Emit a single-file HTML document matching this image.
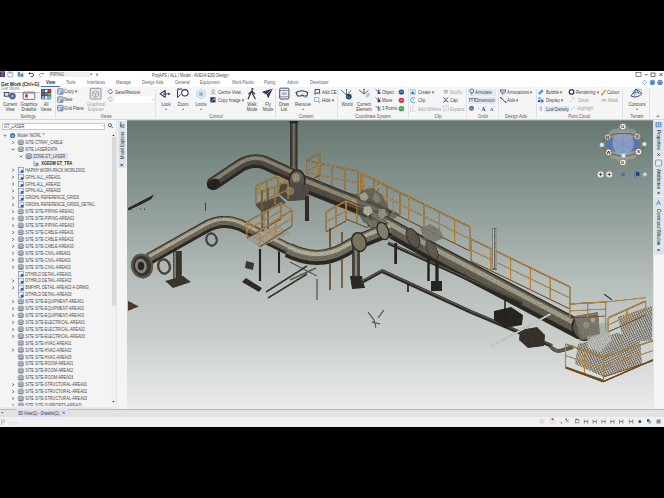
<!DOCTYPE html>
<html><head><meta charset="utf-8">
<style>
html,body{margin:0;padding:0}
body{width:664px;height:498px;background:#000;position:relative;overflow:hidden;font-family:"Liberation Sans",sans-serif;color:#222}
.a{position:absolute}
.t{position:absolute;white-space:nowrap;line-height:1;font-size:4.3px;color:#333}
svg{position:absolute;overflow:visible}
</style></head><body>

<div class="a" style="left:0px;top:71px;width:664px;height:355px;background:#f3f3f3;"></div>
<div class="a" style="left:0px;top:71px;width:664px;height:8px;background:#ffffff;"></div>
<div class="a" style="left:0px;top:79px;width:664px;height:8px;background:#ffffff;"></div>
<div class="a" style="left:0px;top:87px;width:664px;height:33px;background:#f5f5f5;"></div>
<div class="a" style="left:0px;top:119.4px;width:664px;height:0.7px;background:#d6d6d6;"></div>
<div class="t" style="left:151.5px;top:72.68px;font-size:5.14px;color:#444;transform:scaleX(0.769);transform-origin:0 50%;">ProjAPS | ALL | Model - AVEVA E3D Design</div>
<div class="a" style="left:48px;top:71.6px;width:41.5px;height:5.8px;background:#f0f0f0;"></div>
<div class="t" style="left:49.5px;top:72.22px;font-size:5.46px;color:#5a5a5a;transform:scaleX(0.769);transform-origin:0 50%;">PIPING</div>
<div class="t" style="left:90.2px;top:72.22px;font-size:5.46px;color:#333;transform:scaleX(0.769);transform-origin:0 50%;">&#215;</div>
<div class="t" style="left:95.5px;top:72.67px;font-size:4.55px;color:#333;transform:scaleX(0.769);transform-origin:0 50%;">a</div>
<svg style="left:0;top:0" width="664" height="100"><rect x="636" y="72.5" width="5" height="4" fill="none" stroke="#555" stroke-width="0.7"/><path d="M645 74.8 h2.5" stroke="#333" stroke-width="0.8"/><rect x="651" y="73" width="4" height="3.5" fill="none" stroke="#333" stroke-width="0.7"/><path d="M659.5 73 l3 3 M662.5 73 l-3 3" stroke="#333" stroke-width="0.8"/><path d="M644.6 80.2 l2.2 2.2 -2.2 2.2 -2.2 -2.2z" fill="none" stroke="#3a7ac0" stroke-width="0.6"/><circle cx="652.4" cy="82.4" r="2.6" fill="#2f6fb8"/><circle cx="660" cy="82.4" r="2.6" fill="#2f6fb8"/><circle cx="652.4" cy="82.4" r="1.9" fill="none" stroke="#fff" stroke-width="0.35"/><circle cx="660" cy="82.4" r="1.9" fill="none" stroke="#fff" stroke-width="0.35"/><path d="M652.4 81 v1.3 M659.4 81.4 q0.6 -0.6 1.2 0 q0 0.6 -0.6 0.9 v0.4" fill="none" stroke="#fff" stroke-width="0.5"/></svg>
<div class="t" style="left:45.5px;top:80.49px;font-size:5.33px;color:#333;transform:scaleX(0.769);transform-origin:0 50%;font-weight:bold;">View</div>
<div class="t" style="left:66px;top:80.49px;font-size:5.33px;color:#666;transform:scaleX(0.769);transform-origin:0 50%;">Tools</div>
<div class="t" style="left:87px;top:80.49px;font-size:5.33px;color:#666;transform:scaleX(0.769);transform-origin:0 50%;">Interfaces</div>
<div class="t" style="left:115.8px;top:80.49px;font-size:5.33px;color:#666;transform:scaleX(0.769);transform-origin:0 50%;">Manage</div>
<div class="t" style="left:142px;top:80.49px;font-size:5.33px;color:#666;transform:scaleX(0.769);transform-origin:0 50%;">Design Aids</div>
<div class="t" style="left:175px;top:80.49px;font-size:5.33px;color:#666;transform:scaleX(0.769);transform-origin:0 50%;">General</div>
<div class="t" style="left:200px;top:80.49px;font-size:5.33px;color:#666;transform:scaleX(0.769);transform-origin:0 50%;">Equipment</div>
<div class="t" style="left:232px;top:80.49px;font-size:5.33px;color:#666;transform:scaleX(0.769);transform-origin:0 50%;">Work Packs</div>
<div class="t" style="left:264px;top:80.49px;font-size:5.33px;color:#666;transform:scaleX(0.769);transform-origin:0 50%;">Piping</div>
<div class="t" style="left:287px;top:80.49px;font-size:5.33px;color:#666;transform:scaleX(0.769);transform-origin:0 50%;">Admin</div>
<div class="t" style="left:310px;top:80.49px;font-size:5.33px;color:#666;transform:scaleX(0.769);transform-origin:0 50%;">Developer</div>
<div class="a" style="left:41px;top:86px;width:19px;height:0.9px;background:#3b6fd8;"></div>
<div class="a" style="left:0px;top:78.8px;width:39.7px;height:12.8px;background:#fafafa;box-shadow:0.3px 0.6px 0.8px rgba(0,0,0,0.18)"></div>
<div class="t" style="left:1px;top:80.67px;font-size:5.98px;color:#2a2a2a;transform:scaleX(0.769);transform-origin:0 50%;font-weight:bold;letter-spacing:-0.05px">Get Work (Ctrl+G)</div>
<div class="t" style="left:1px;top:86.00px;font-size:5.72px;color:#8a8a8a;transform:scaleX(0.769);transform-origin:0 50%;">Get Work</div>
<div class="t" style="left:-20.5px;width:60px;text-align:center;top:101.89px;font-size:5.53px;color:#424242;transform:scaleX(0.769);">Current</div>
<div class="t" style="left:-20.5px;width:60px;text-align:center;top:107.29px;font-size:5.53px;color:#424242;transform:scaleX(0.769);">View</div>
<div class="t" style="left:-1.5px;width:60px;text-align:center;top:101.89px;font-size:5.53px;color:#424242;transform:scaleX(0.769);">Graphics</div>
<div class="t" style="left:-1.5px;width:60px;text-align:center;top:107.29px;font-size:5.53px;color:#424242;transform:scaleX(0.769);">Drawlist</div>
<div class="t" style="left:16px;width:60px;text-align:center;top:101.89px;font-size:5.53px;color:#424242;transform:scaleX(0.769);">All</div>
<div class="t" style="left:16px;width:60px;text-align:center;top:107.29px;font-size:5.53px;color:#424242;transform:scaleX(0.769);">Views</div>
<div class="t" style="left:65.5px;width:60px;text-align:center;top:101.89px;font-size:5.53px;color:#a0a0a0;transform:scaleX(0.769);">Graphical</div>
<div class="t" style="left:65.5px;width:60px;text-align:center;top:107.29px;font-size:5.53px;color:#a0a0a0;transform:scaleX(0.769);">Explorer</div>
<div class="t" style="left:135.5px;width:60px;text-align:center;top:101.89px;font-size:5.53px;color:#424242;transform:scaleX(0.769);">Look</div>
<div class="t" style="left:135.5px;width:60px;text-align:center;top:107.29px;font-size:5.53px;color:#424242;transform:scaleX(0.769);">&#8226;</div>
<div class="t" style="left:153px;width:60px;text-align:center;top:101.89px;font-size:5.53px;color:#424242;transform:scaleX(0.769);">Zoom</div>
<div class="t" style="left:153px;width:60px;text-align:center;top:107.29px;font-size:5.53px;color:#424242;transform:scaleX(0.769);">&#8226;</div>
<div class="t" style="left:170.5px;width:60px;text-align:center;top:101.89px;font-size:5.53px;color:#424242;transform:scaleX(0.769);">Limits</div>
<div class="t" style="left:170.5px;width:60px;text-align:center;top:107.29px;font-size:5.53px;color:#424242;transform:scaleX(0.769);">&#8226;</div>
<div class="t" style="left:221.5px;width:60px;text-align:center;top:101.89px;font-size:5.53px;color:#424242;transform:scaleX(0.769);">Walk</div>
<div class="t" style="left:221.5px;width:60px;text-align:center;top:107.29px;font-size:5.53px;color:#424242;transform:scaleX(0.769);">Mode</div>
<div class="t" style="left:238px;width:60px;text-align:center;top:101.89px;font-size:5.53px;color:#424242;transform:scaleX(0.769);">Fly</div>
<div class="t" style="left:238px;width:60px;text-align:center;top:107.29px;font-size:5.53px;color:#424242;transform:scaleX(0.769);">Mode</div>
<div class="t" style="left:254px;width:60px;text-align:center;top:101.89px;font-size:5.53px;color:#424242;transform:scaleX(0.769);">Draw</div>
<div class="t" style="left:254px;width:60px;text-align:center;top:107.29px;font-size:5.53px;color:#424242;transform:scaleX(0.769);">List</div>
<div class="t" style="left:272.5px;width:60px;text-align:center;top:101.89px;font-size:5.53px;color:#424242;transform:scaleX(0.769);">Remove</div>
<div class="t" style="left:272.5px;width:60px;text-align:center;top:107.29px;font-size:5.53px;color:#424242;transform:scaleX(0.769);">&#8226;</div>
<div class="t" style="left:316.5px;width:60px;text-align:center;top:101.89px;font-size:5.53px;color:#424242;transform:scaleX(0.769);">World</div>
<div class="t" style="left:334px;width:60px;text-align:center;top:101.89px;font-size:5.53px;color:#424242;transform:scaleX(0.769);">Current</div>
<div class="t" style="left:334px;width:60px;text-align:center;top:107.29px;font-size:5.53px;color:#424242;transform:scaleX(0.769);">Element</div>
<div class="t" style="left:606.5px;width:60px;text-align:center;top:101.89px;font-size:5.53px;color:#424242;transform:scaleX(0.769);">Contours</div>
<div class="t" style="left:606.5px;width:60px;text-align:center;top:107.29px;font-size:5.53px;color:#424242;transform:scaleX(0.769);">&#8226;</div>
<div class="a" style="left:468px;top:89px;width:28px;height:6.5px;background:#dfe8f7;"></div>
<div class="a" style="left:468px;top:97.3px;width:28px;height:6.5px;background:#dfe8f7;"></div>
<div class="a" style="left:544px;top:105.8px;width:25px;height:6px;background:#dfe8f7;"></div>
<div class="t" style="left:64px;top:89.22px;font-size:5.46px;color:#424242;transform:scaleX(0.769);transform-origin:0 50%;">Copy &#9662;</div>
<div class="t" style="left:64px;top:97.32px;font-size:5.46px;color:#424242;transform:scaleX(0.769);transform-origin:0 50%;">New</div>
<div class="t" style="left:64px;top:105.72px;font-size:5.46px;color:#424242;transform:scaleX(0.769);transform-origin:0 50%;">Grid Plane</div>
<div class="t" style="left:115px;top:89.72px;font-size:5.46px;color:#424242;transform:scaleX(0.769);transform-origin:0 50%;">Save/Restore</div>
<div class="t" style="left:218px;top:89.72px;font-size:5.46px;color:#424242;transform:scaleX(0.769);transform-origin:0 50%;">Centre View</div>
<div class="t" style="left:218px;top:97.72px;font-size:5.46px;color:#424242;transform:scaleX(0.769);transform-origin:0 50%;">Copy Image &#9662;</div>
<div class="t" style="left:322px;top:89.72px;font-size:5.46px;color:#424242;transform:scaleX(0.769);transform-origin:0 50%;">Add CE</div>
<div class="t" style="left:322px;top:97.72px;font-size:5.46px;color:#424242;transform:scaleX(0.769);transform-origin:0 50%;">Hide &#9662;</div>
<div class="t" style="left:381.5px;top:89.72px;font-size:5.46px;color:#424242;transform:scaleX(0.769);transform-origin:0 50%;">Object</div>
<div class="t" style="left:382px;top:97.72px;font-size:5.46px;color:#424242;transform:scaleX(0.769);transform-origin:0 50%;">Move</div>
<div class="t" style="left:382px;top:106.32px;font-size:5.46px;color:#424242;transform:scaleX(0.769);transform-origin:0 50%;">3 Points</div>
<div class="t" style="left:418px;top:89.72px;font-size:5.46px;color:#424242;transform:scaleX(0.769);transform-origin:0 50%;">Create &#9662;</div>
<div class="t" style="left:418px;top:97.72px;font-size:5.46px;color:#424242;transform:scaleX(0.769);transform-origin:0 50%;">Clip</div>
<div class="t" style="left:418px;top:106.72px;font-size:5.46px;color:#a0a0a0;transform:scaleX(0.769);transform-origin:0 50%;">Add Within &#9662;</div>
<div class="t" style="left:450px;top:89.72px;font-size:5.46px;color:#a0a0a0;transform:scaleX(0.769);transform-origin:0 50%;">Modify</div>
<div class="t" style="left:450px;top:97.72px;font-size:5.46px;color:#424242;transform:scaleX(0.769);transform-origin:0 50%;">Cap</div>
<div class="t" style="left:450px;top:106.72px;font-size:5.46px;color:#a0a0a0;transform:scaleX(0.769);transform-origin:0 50%;">Expand</div>
<div class="t" style="left:475px;top:89.72px;font-size:5.46px;color:#424242;transform:scaleX(0.769);transform-origin:0 50%;">Annotate</div>
<div class="t" style="left:475px;top:98.22px;font-size:5.46px;color:#424242;transform:scaleX(0.769);transform-origin:0 50%;">Dimension</div>
<div class="t" style="left:507px;top:89.72px;font-size:5.46px;color:#424242;transform:scaleX(0.769);transform-origin:0 50%;">Annotations &#9662;</div>
<div class="t" style="left:507px;top:97.72px;font-size:5.46px;color:#424242;transform:scaleX(0.769);transform-origin:0 50%;">Aids &#9662;</div>
<div class="t" style="left:546px;top:89.72px;font-size:5.46px;color:#424242;transform:scaleX(0.769);transform-origin:0 50%;">Bubble &#9662;</div>
<div class="t" style="left:546px;top:97.72px;font-size:5.46px;color:#424242;transform:scaleX(0.769);transform-origin:0 50%;">Display &#9662;</div>
<div class="t" style="left:545.5px;top:106.52px;font-size:5.46px;color:#424242;transform:scaleX(0.769);transform-origin:0 50%;">Low Density</div>
<div class="t" style="left:576px;top:89.72px;font-size:5.46px;color:#424242;transform:scaleX(0.769);transform-origin:0 50%;">Rendering &#9662;</div>
<div class="t" style="left:578px;top:97.72px;font-size:5.46px;color:#a0a0a0;transform:scaleX(0.769);transform-origin:0 50%;">Detail</div>
<div class="t" style="left:577px;top:106.22px;font-size:5.46px;color:#a0a0a0;transform:scaleX(0.769);transform-origin:0 50%;">Highlight</div>
<div class="t" style="left:607px;top:89.72px;font-size:5.46px;color:#424242;transform:scaleX(0.769);transform-origin:0 50%;">Colour</div>
<div class="t" style="left:607.8px;top:97.72px;font-size:5.46px;color:#a0a0a0;transform:scaleX(0.769);transform-origin:0 50%;">Mask</div>
<div class="a" style="left:115px;top:96.2px;width:39px;height:7px;background:#ffffff;"></div>
<div class="t" style="left:-2.5px;width:60px;text-align:center;top:113.52px;font-size:5.46px;color:#555;transform:scaleX(0.769);">Settings</div>
<div class="t" style="left:75.5px;width:60px;text-align:center;top:113.52px;font-size:5.46px;color:#555;transform:scaleX(0.769);">Views</div>
<div class="t" style="left:186px;width:60px;text-align:center;top:113.52px;font-size:5.46px;color:#555;transform:scaleX(0.769);">Control</div>
<div class="t" style="left:276px;width:60px;text-align:center;top:113.52px;font-size:5.46px;color:#555;transform:scaleX(0.769);">Content</div>
<div class="t" style="left:343px;width:60px;text-align:center;top:113.52px;font-size:5.46px;color:#555;transform:scaleX(0.769);">Coordinate System</div>
<div class="t" style="left:407.5px;width:60px;text-align:center;top:113.52px;font-size:5.46px;color:#555;transform:scaleX(0.769);">Clip</div>
<div class="t" style="left:452.5px;width:60px;text-align:center;top:113.52px;font-size:5.46px;color:#555;transform:scaleX(0.769);">Grids</div>
<div class="t" style="left:486px;width:60px;text-align:center;top:113.52px;font-size:5.46px;color:#555;transform:scaleX(0.769);">Design Aids</div>
<div class="t" style="left:549px;width:60px;text-align:center;top:113.52px;font-size:5.46px;color:#555;transform:scaleX(0.769);">Point Cloud</div>
<div class="t" style="left:606.5px;width:60px;text-align:center;top:113.52px;font-size:5.46px;color:#555;transform:scaleX(0.769);">Terrain</div>
<div class="a" style="left:55.1px;top:89px;width:1.2px;height:29px;background:#dde2ea;"></div>
<div class="a" style="left:155.2px;top:89px;width:1.2px;height:29px;background:#dde2ea;"></div>
<div class="a" style="left:275.3px;top:89px;width:1.2px;height:29px;background:#dde2ea;"></div>
<div class="a" style="left:337.3px;top:89px;width:1.2px;height:29px;background:#dde2ea;"></div>
<div class="a" style="left:407.5px;top:89px;width:1.2px;height:29px;background:#dde2ea;"></div>
<div class="a" style="left:465.7px;top:89px;width:1.2px;height:29px;background:#dde2ea;"></div>
<div class="a" style="left:498.3px;top:89px;width:1.2px;height:29px;background:#dde2ea;"></div>
<div class="a" style="left:535.5px;top:89px;width:1.2px;height:29px;background:#dde2ea;"></div>
<div class="a" style="left:622.0px;top:89px;width:1.2px;height:29px;background:#dde2ea;"></div>
<div class="a" style="left:649.2px;top:89px;width:1.2px;height:29px;background:#dde2ea;"></div>
<svg style="left:0;top:0" width="664" height="120"><path d="M656.5 117 l1.5 -1.5 1.5 1.5" fill="none" stroke="#222" stroke-width="0.7"/></svg>
<svg style="left:0;top:0" width="664" height="120"><rect x="0" y="71.3" width="5" height="5.8" fill="#4a2a72"/><path d="M1 72.5 h3 M1 74.2 h3 M1 75.9 h3" stroke="#b9a6d6" stroke-width="0.5"/><rect x="7.8" y="72" width="5" height="4.8" rx="0.6" fill="none" stroke="#8a95a5" stroke-width="0.8"/><rect x="9.3" y="72" width="2" height="1.6" fill="#8a95a5"/><rect x="16.8" y="71.3" width="7.5" height="6.2" fill="#e4ebf6"/><rect x="17.8" y="72" width="2.2" height="4.6" fill="#5b8fd0"/><rect x="20.5" y="73.8" width="2.8" height="2.9" fill="#6f7a88"/><path d="M29.5 73.4 h2.5 a1.6 1.6 0 0 1 0 3.2 h-1.5" fill="none" stroke="#2b3a55" stroke-width="0.9"/><path d="M28.2 73.4 l1.8 -1.4 v2.8z" fill="#2b3a55"/><path d="M43 73.6 h-2.3 a1.5 1.5 0 0 0 0 3 h0.8" fill="none" stroke="#888" stroke-width="0.7"/><path d="M44.3 73.6 l-1.6 -1.2 v2.4z" fill="#888"/><rect x="4.3" y="92.6" width="4.6" height="3.6" fill="#dfe6ee" stroke="#2b3a55" stroke-width="0.9"/><circle cx="12.4" cy="96.1" r="2.9" fill="#5c7fae" stroke="#2b3a55" stroke-width="0.8"/><circle cx="12.4" cy="96.1" r="0.9" fill="#b8cde6"/><rect x="23.2" y="92.2" width="11.6" height="7.2" rx="0.8" fill="#f2f6fb" stroke="#5d6673" stroke-width="0.9"/><rect x="25.2" y="94.3" width="2.5" height="3.2" fill="#d8202c"/><path d="M23.2 93.2 h11.6" stroke="#5d6673" stroke-width="0.6"/><rect x="41" y="89" width="10.2" height="10.2" rx="0.6" fill="#34435a"/><rect x="41.70" y="89.70" width="2.6" height="2.6" fill="#3b8fe8"/><rect x="44.95" y="89.70" width="2.6" height="2.6" fill="#ffffff"/><rect x="48.20" y="89.70" width="2.6" height="2.6" fill="#e2303c"/><rect x="41.70" y="92.95" width="2.6" height="2.6" fill="#e2303c"/><rect x="44.95" y="92.95" width="2.6" height="2.6" fill="#3b8fe8"/><rect x="48.20" y="92.95" width="2.6" height="2.6" fill="#66cc3e"/><rect x="41.70" y="96.20" width="2.6" height="2.6" fill="#8ecaf2"/><rect x="44.95" y="96.20" width="2.6" height="2.6" fill="#ffffff"/><rect x="48.20" y="96.20" width="2.6" height="2.6" fill="#8ecaf2"/><rect x="57.8" y="88.8" width="5.2" height="5.4" rx="0.5" fill="#e9eef5" stroke="#56606e" stroke-width="0.8"/><path d="M57.8 91.0 h5.2" stroke="#56606e" stroke-width="0.5"/><rect x="60.4" y="91.7" width="2.4" height="2.3" fill="#4f8fd8"/><rect x="57.8" y="96.9" width="5.2" height="5.4" rx="0.5" fill="#e9eef5" stroke="#56606e" stroke-width="0.8"/><path d="M57.8 99.1 h5.2" stroke="#56606e" stroke-width="0.5"/><rect x="60.4" y="99.8" width="2.4" height="2.3" fill="#4f8fd8"/><rect x="57.8" y="105.4" width="5.2" height="5.4" rx="0.5" fill="#e9eef5" stroke="#56606e" stroke-width="0.8"/><path d="M57.8 107.6 h5.2" stroke="#56606e" stroke-width="0.5"/><rect x="60.4" y="108.3" width="2.4" height="2.3" fill="#4f8fd8"/><rect x="90.2" y="88.3" width="10.8" height="10.8" rx="0.8" fill="#e6e6e6" stroke="#8c8c8c" stroke-width="0.9"/><path d="M95.6 90.6 l3 1.6 v3.5 l-3 1.6 -3 -1.6 v-3.5z M92.6 92.2 l3 1.6 3 -1.6 M95.6 93.8 v3.5" fill="none" stroke="#8a8a8a" stroke-width="0.6"/><path d="M108 91.5 a2.3 2 0 0 1 4.2 -1" fill="none" stroke="#3f84d4" stroke-width="1"/><path d="M112.6 91.6 a2.3 2 0 0 1 -4.2 1" fill="none" stroke="#5a6a80" stroke-width="1"/><path d="M108 99 a2.3 2 0 0 1 4.2 -1" fill="none" stroke="#aaa" stroke-width="0.8"/><path d="M112.6 99.1 a2.3 2 0 0 1 -4.2 1" fill="none" stroke="#aaa" stroke-width="0.8"/><path d="M151.5 99 l0.8 0.8 0.8 -0.8" fill="none" stroke="#666" stroke-width="0.45"/><path d="M160 93.9 l5.2 -3.4 v6.8z" fill="none" stroke="#2b3a55" stroke-width="1.1" stroke-linejoin="round"/><path d="M163.5 93.9 h5.5" stroke="#2b3a55" stroke-width="0.9"/><path d="M168.2 92.6 l2.4 1.3 -2.4 1.3z" fill="#2b3a55"/><circle cx="163.6" cy="93.9" r="0.8" fill="#3a7ad0"/><path d="M177.5 89 h4.5 M177.5 89 v8.5 l3 -3" fill="none" stroke="#2b3a55" stroke-width="1"/><rect x="177.3" y="88.8" width="2.2" height="1.5" fill="#4f8fd8"/><circle cx="184.9" cy="92.8" r="3.2" fill="#fff" stroke="#2b3a55" stroke-width="1.1"/><path d="M197 91.5 l4 -2.2 4 2.2 v5 l-4 2.2 -4 -2.2z" fill="#e4f0fb" stroke="#9ccaf0" stroke-width="0.7"/><circle cx="201" cy="94" r="2" fill="#c9dcee" stroke="#6d8fb3" stroke-width="0.5"/><circle cx="201" cy="94" r="0.7" fill="#3b5a88"/><circle cx="213.2" cy="90.8" r="1.3" fill="none" stroke="#6c8fb8" stroke-width="0.6"/><path d="M210.8 94.4 q2.4 -3.6 4.8 0" fill="#cfe2f5" stroke="#6c8fb8" stroke-width="0.6"/><rect x="210.3" y="97.2" width="5.2" height="5.2" fill="#2b3a55"/><path d="M211 101 l2 -1.6 2 -1.4 v1.6z" fill="#9fd0f2"/><circle cx="252.4" cy="89" r="1.1" fill="#2b3a55"/><path d="M252 90.6 l-1.8 3.6 -2 4.6 M252 90.6 l0.8 3.6 2.4 4.6 M250.4 92 l-1.6 2 M252.8 92 l1.8 1.8" fill="none" stroke="#2b3a55" stroke-width="1.2" stroke-linecap="round"/><path d="M261.8 92 l11 -3.6 -4.6 10.2 -1.6 -4.2z" fill="#2b3a55"/><path d="M266.6 94.4 l6 -5.8" stroke="#f5f5f5" stroke-width="0.5"/><rect x="279.7" y="88.2" width="9.2" height="10.8" rx="1" fill="#e8edf3" stroke="#4b5668" stroke-width="1"/><path d="M280 90.5 h8.6 M280 96.8 h8.6" stroke="#4b5668" stroke-width="0.6"/><path d="M282 93.6 q2.3 -2 4.6 0 q-2.3 2 -4.6 0z" fill="none" stroke="#4b5668" stroke-width="0.5"/><path d="M296 92.5 q5.8 -3.4 11.6 0 l-0.6 3.5 h-3.5 l-1.2 -1.2 -1.2 1.2 h-3.5z" fill="#f0f0f0" stroke="#2b3a55" stroke-width="1.1" stroke-linejoin="round"/><path d="M304.5 97.3 h3" stroke="#4f9fe8" stroke-width="0.7"/><path d="M315 89.5 h4.6 v3.6 h-3.2 l-1.4 1.3z" fill="none" stroke="#2b3a55" stroke-width="0.9"/><path d="M317.5 94 h3" stroke="#4f9fe8" stroke-width="0.6"/><rect x="314.5" y="97.4" width="4.4" height="4" fill="none" stroke="#7cb4e8" stroke-width="0.8"/><path d="M318 101.3 l1.8 1.4" stroke="#555" stroke-width="0.6"/><path d="M346.5 95 l-5.2 -4.5 M346.5 95 v-5.5 M346.5 95 l4.5 -4.3" stroke="#3b4556" stroke-width="0.7"/><path d="M346.5 89 l-0.8 1 h1.6z M341 90.2 l1.2 0 -0.5 1z M351.4 90 l-1.2 0.2 0.6 0.9z" fill="#3b4556"/><circle cx="348.8" cy="96.6" r="2.9" fill="#24426e"/><path d="M347.3 96 a1.6 1.6 0 0 0 3 0.8" fill="none" stroke="#8fc3f0" stroke-width="0.6"/><path d="M364 94 l-5 -4 M364 94 v-5.2 M364 94 l4.5 -3.6" stroke="#2b3a55" stroke-width="0.8"/><path d="M364 88.4 l-0.8 1 h1.6z" fill="#2b3a55"/><path d="M366.5 97.6 l2.6 -1.8 v-3 l-2.6 1.6z" fill="#9dc8ef" stroke="#6aaee8" stroke-width="0.4"/><path d="M378.5 91.8 l-3 -2.4 M378.5 91.8 v-2.6 M378.5 91.8 l2 -1.6" stroke="#2b3a55" stroke-width="0.7"/><rect x="377.6" y="91.8" width="2.8" height="2.2" fill="#2b5d9e"/><path d="M378.5 100.0 l-3 -2.4 M378.5 100.0 v-2.6 M378.5 100.0 l2 -1.6" stroke="#2b3a55" stroke-width="0.7"/><rect x="377.6" y="100.0" width="2.8" height="2.2" fill="#2b3a55"/><path d="M378.5 108.5 l-3 -2.4 M378.5 108.5 v-2.6 M378.5 108.5 l2 -1.6" stroke="#2b3a55" stroke-width="0.7"/><rect x="377.6" y="108.5" width="2.8" height="2.2" fill="#4f9fe8"/><ellipse cx="401.4" cy="92" rx="2.8" ry="2.6" fill="#2b4f9e"/><path d="M399.5 92.2 q1.9 -1.4 3.8 0" fill="none" stroke="#fff" stroke-width="0.5"/><ellipse cx="401.4" cy="100.3" rx="2.8" ry="2.6" fill="#d8303c"/><path d="M399.5 100.5 q1.9 -1.4 3.8 0" fill="none" stroke="#fff" stroke-width="0.5"/><ellipse cx="401.4" cy="108.7" rx="2.8" ry="2.6" fill="#3aa04a"/><path d="M399.5 108.9 q1.9 -1.4 3.8 0" fill="none" stroke="#fff" stroke-width="0.5"/><rect x="410.3" y="89.4" width="5.2" height="5" fill="#cfe3f6" stroke="#7fb6ea" stroke-width="0.5"/><path d="M411 93.8 l1.8 -2.6 1.8 2.6z" fill="#3b5a88"/><path d="M415.2 98.4 a2.6 2.6 0 1 0 0 3.4" fill="none" stroke="#5aa0e6" stroke-width="1"/><path d="M412.5 99.3 l1.5 1 " stroke="#3b4556" stroke-width="0.6"/><path d="M410.5 106 v5 h5 M412 106 h2 M413 107.5 v2" fill="none" stroke="#bdbdbd" stroke-width="0.6"/><path d="M443.5 90 h4.8 l-0.8 3 h-3.2z" fill="#bdbdbd"/><path d="M444.5 93.5 h3" stroke="#bdbdbd" stroke-width="0.6"/><path d="M443.3 97.5 l2.5 2 2.5 -2 M443.3 102.3 l2.5 -2 2.5 2" fill="none" stroke="#2b3a55" stroke-width="0.9"/><path d="M443.3 101.3 h5.2" stroke="#4f9fe8" stroke-width="0.6"/><rect x="443.5" y="106" width="5" height="4.8" fill="none" stroke="#c2c2c2" stroke-width="0.6"/><path d="M443.5 106 l5 4.8 M448.5 106 l-5 4.8" stroke="#c8c8c8" stroke-width="0.4"/><circle cx="471.8" cy="91" r="1.9" fill="none" stroke="#3b4556" stroke-width="0.7"/><path d="M471.8 93 v1.8" stroke="#3b4556" stroke-width="0.7"/><path d="M469.2 98.5 h5.5 M469.5 98.5 v3 M472 98.5 v3 M474.5 98.5 v3" stroke="#3b4556" stroke-width="0.6"/><circle cx="471.5" cy="108.3" r="2.5" fill="#6b7584"/><path d="M470.5 108.5 h2" stroke="#e8e8e8" stroke-width="0.5"/><path d="M478.5 108 l0.6 0.6 0.6 -0.6z" fill="#333"/><text x="481.2" y="110.5" font-size="6" font-weight="bold" fill="#2b3a55" font-family="Liberation Serif">A</text><circle cx="486.2" cy="106.4" r="0.5" fill="#4f9fe8"/><text x="489.8" y="110.5" font-size="5" font-weight="bold" fill="#2b3a55" font-family="Liberation Serif">A</text><circle cx="494" cy="106.2" r="0.5" fill="#4f9fe8"/><path d="M500.2 90 h5.6 l-1 2.6 -1.8 1.8 -1.8 -1.8z" fill="none" stroke="#2b3a55" stroke-width="0.8"/><circle cx="503" cy="92.3" r="1" fill="#6aaee8"/><path d="M500.5 97.5 l5.5 5" stroke="#2b3a55" stroke-width="0.9"/><circle cx="500.8" cy="97.8" r="0.7" fill="#2b3a55"/><circle cx="505.7" cy="102.2" r="0.7" fill="#2b3a55"/><path d="M502.5 98 l1.2 -1" stroke="#4f9fe8" stroke-width="0.6"/><path d="M538.3 92.8 l3.5 -3.5 1.7 1.7 -3.5 3.5 q-1.8 0.5 -1.7 -1.7z" fill="#3b8fe0"/><path d="M538.6 93 l2 -2" stroke="#cfe6fb" stroke-width="0.5"/><circle cx="539.6" cy="98.3" r="1.3" fill="#6ab0ec"/><circle cx="542" cy="101" r="1.8" fill="#3b8fe0"/><circle cx="539" cy="101.2" r="1.1" fill="#24426e"/><path d="M540.2 106.3 v4.6 M541.5 106.3 v4.6" stroke="#a4a9b4" stroke-width="0.8"/><circle cx="571.6" cy="91.9" r="2.3" fill="none" stroke="#2b3a55" stroke-width="1.3"/><path d="M569.8 102.3 l2.5 -2.5 M571.5 98.5 a1.5 1.5 0 1 1 2.5 1.5" fill="none" stroke="#bbb" stroke-width="0.7"/><path d="M570.3 110.8 l4 -4" stroke="#b5b5b5" stroke-width="0.8"/><path d="M601.8 94.5 l3.6 -4.2" stroke="#ec8a1a" stroke-width="1.3" stroke-linecap="round"/><path d="M601.4 95 h1.2" stroke="#444" stroke-width="0.5"/><path d="M601.5 100.2 q2.5 -2 5 0 q-2.5 2 -5 0z" fill="none" stroke="#b8b8b8" stroke-width="0.8"/><path d="M602 101.8 l4 -3" stroke="#bbb" stroke-width="0.5"/><path d="M631 96 l5 -7 6 4.5 q-5 5.5 -11 2.5z" fill="#dbe9f7" stroke="#2b3a55" stroke-width="0.9" stroke-linejoin="round"/><path d="M636 89 l-1.5 6.5 M636 89 l3.5 5.2 M633 93 q3 -1 6 0" fill="none" stroke="#2b3a55" stroke-width="0.5"/><path d="M637.5 89.2 q3 -0.5 4.5 1.5" fill="none" stroke="#4f8fd8" stroke-width="0.7"/></svg>
<div class="a" style="left:0px;top:120px;width:117px;height:287px;background:#f4f4f4;"></div>
<div class="a" style="left:2px;top:122.5px;width:103px;height:7px;background:#ffffff;border:0.5px solid #c9c9c9;box-sizing:border-box"></div>
<div class="t" style="left:3.5px;top:123.92px;font-size:5.07px;color:#444;transform:scaleX(0.769);transform-origin:0 50%;">GT_LASER</div>
<svg style="left:0;top:0" width="130" height="420"><path d="M101.8 125.4 l1 1 1 -1" fill="none" stroke="#777" stroke-width="0.5"/><circle cx="110" cy="125.2" r="1.6" fill="none" stroke="#333" stroke-width="0.7"/><path d="M111.2 126.4 l1.6 1.6" stroke="#333" stroke-width="0.8"/></svg>
<div class="a" style="left:111px;top:133px;width:5px;height:271px;background:#f1f1f1;"></div>
<div class="a" style="left:111.5px;top:137px;width:4.2px;height:169px;background:#d9d9d9;"></div>
<svg style="left:0;top:0" width="130" height="420"><path d="M112.3 136 l1.2 -1.3 1.2 1.3z M112.3 401 l1.2 1.3 1.2 -1.3z" fill="#111"/></svg>
<svg style="left:0;top:0" width="117" height="406"><defs><clipPath id="tc"><rect x="0" y="131" width="111" height="275"/></clipPath></defs><g clip-path="url(#tc)"><path d="M3.7 134.90 l1.4 1.3 1.4 -1.3" fill="none" stroke="#3a3a3a" stroke-width="0.8"/><circle cx="12.6" cy="135.50" r="2.6" fill="#3f78b5"/><path d="M11 134.50 q1 1 2.5 0.5 l0.5 1.5 -1.5 1z" fill="#9ccf6a"/><text x="17.3" y="137.10" font-size="5.1" fill="#4a4a4a" font-weight="normal" font-family="Liberation Sans" textLength="27.28" lengthAdjust="spacingAndGlyphs">Model 'WORL' *</text><path d="M12.4 141.12 l1.3 1.4 -1.3 1.4" fill="none" stroke="#3a3a3a" stroke-width="0.8"/><ellipse cx="20.9" cy="143.62" rx="2.9" ry="1.5" fill="#6f7a88"/><ellipse cx="20.9" cy="142.52" rx="2.9" ry="1.5" fill="#d0d6de" stroke="#6f7a88" stroke-width="0.45"/><ellipse cx="20.9" cy="141.22" rx="2.9" ry="1.5" fill="#aab3bf" stroke="#6f7a88" stroke-width="0.45"/><text x="25.3" y="144.02" font-size="5.1" fill="#4a4a4a" font-weight="normal" font-family="Liberation Sans" textLength="37.35" lengthAdjust="spacingAndGlyphs">SITE CTRAY_CABLE</text><path d="M11.7 148.74 l1.4 1.3 1.4 -1.3" fill="none" stroke="#3a3a3a" stroke-width="0.8"/><ellipse cx="20.9" cy="150.54" rx="2.9" ry="1.5" fill="#6f7a88"/><ellipse cx="20.9" cy="149.44" rx="2.9" ry="1.5" fill="#d0d6de" stroke="#6f7a88" stroke-width="0.45"/><ellipse cx="20.9" cy="148.14" rx="2.9" ry="1.5" fill="#aab3bf" stroke="#6f7a88" stroke-width="0.45"/><text x="25.3" y="150.94" font-size="5.1" fill="#4a4a4a" font-weight="normal" font-family="Liberation Sans" textLength="32.11" lengthAdjust="spacingAndGlyphs">SITE LASERDATA</text><path d="M19.7 155.66 l1.4 1.3 1.4 -1.3" fill="none" stroke="#3a3a3a" stroke-width="0.8"/><rect x="25" y="152.96" width="43" height="6.6" fill="#dce4f2"/><ellipse cx="28.9" cy="157.46" rx="2.9" ry="1.5" fill="#6f7a88"/><ellipse cx="28.9" cy="156.36" rx="2.9" ry="1.5" fill="#d0d6de" stroke="#6f7a88" stroke-width="0.45"/><ellipse cx="28.9" cy="155.06" rx="2.9" ry="1.5" fill="#aab3bf" stroke="#6f7a88" stroke-width="0.45"/><text x="33.3" y="157.86" font-size="5.1" fill="#4a4a4a" font-weight="normal" font-family="Liberation Sans" textLength="32.04" lengthAdjust="spacingAndGlyphs">ZONE GT_LASER</text><path d="M34 160.68 v5 h5" fill="none" stroke="#6b7683" stroke-width="0.7"/><rect x="35.5" y="162.68" width="3" height="2.5" fill="#7c8794"/><text x="41.3" y="164.78" font-size="5.1" fill="#1e1e1e" font-weight="bold" font-family="Liberation Sans" textLength="30.96" lengthAdjust="spacingAndGlyphs">XGEOM GT_TRA</text><path d="M12.4 168.80 l1.3 1.4 -1.3 1.4" fill="none" stroke="#3a3a3a" stroke-width="0.8"/><rect x="18.3" y="167.50" width="5" height="5.2" fill="#e8eef6" stroke="#5a6a80" stroke-width="0.5"/><rect x="20.8" y="170.30" width="2.6" height="2.4" fill="#2d5da0"/><text x="25.3" y="171.70" font-size="5.1" fill="#4a4a4a" font-weight="normal" font-family="Liberation Sans" textLength="59.93" lengthAdjust="spacingAndGlyphs">HAPKH WORK-PACK WORLD001</text><path d="M12.4 175.72 l1.3 1.4 -1.3 1.4" fill="none" stroke="#3a3a3a" stroke-width="0.8"/><rect x="18.3" y="174.42" width="5" height="5.2" fill="#e8eef6" stroke="#5a6a80" stroke-width="0.5"/><rect x="20.8" y="177.22" width="2.6" height="2.4" fill="#2d5da0"/><text x="25.3" y="178.62" font-size="5.1" fill="#4a4a4a" font-weight="normal" font-family="Liberation Sans" textLength="35.14" lengthAdjust="spacingAndGlyphs">GPHL ALL_AREA01</text><path d="M12.4 182.64 l1.3 1.4 -1.3 1.4" fill="none" stroke="#3a3a3a" stroke-width="0.8"/><rect x="18.3" y="181.34" width="5" height="5.2" fill="#e8eef6" stroke="#5a6a80" stroke-width="0.5"/><rect x="20.8" y="184.14" width="2.6" height="2.4" fill="#2d5da0"/><text x="25.3" y="185.54" font-size="5.1" fill="#4a4a4a" font-weight="normal" font-family="Liberation Sans" textLength="35.14" lengthAdjust="spacingAndGlyphs">GPHL ALL_AREA02</text><path d="M12.4 189.56 l1.3 1.4 -1.3 1.4" fill="none" stroke="#3a3a3a" stroke-width="0.8"/><rect x="18.3" y="188.26" width="5" height="5.2" fill="#e8eef6" stroke="#5a6a80" stroke-width="0.5"/><rect x="20.8" y="191.06" width="2.6" height="2.4" fill="#2d5da0"/><text x="25.3" y="192.46" font-size="5.1" fill="#4a4a4a" font-weight="normal" font-family="Liberation Sans" textLength="35.14" lengthAdjust="spacingAndGlyphs">GPHL ALL_AREA03</text><path d="M12.4 196.48 l1.3 1.4 -1.3 1.4" fill="none" stroke="#3a3a3a" stroke-width="0.8"/><rect x="18.3" y="195.18" width="5" height="5.2" fill="#e8eef6" stroke="#5a6a80" stroke-width="0.5"/><rect x="20.8" y="197.98" width="2.6" height="2.4" fill="#2d5da0"/><text x="25.3" y="199.38" font-size="5.1" fill="#4a4a4a" font-weight="normal" font-family="Liberation Sans" textLength="53.83" lengthAdjust="spacingAndGlyphs">GRIDHL REFERENCE_GRIDS</text><path d="M12.4 203.40 l1.3 1.4 -1.3 1.4" fill="none" stroke="#3a3a3a" stroke-width="0.8"/><rect x="18.3" y="202.10" width="5" height="5.2" fill="#e8eef6" stroke="#5a6a80" stroke-width="0.5"/><rect x="20.8" y="204.90" width="2.6" height="2.4" fill="#2d5da0"/><text x="25.3" y="206.30" font-size="5.1" fill="#4a4a4a" font-weight="normal" font-family="Liberation Sans" textLength="69.24" lengthAdjust="spacingAndGlyphs">GRIDHL REFERENCE_GRIDS_DETAIL</text><path d="M12.4 210.32 l1.3 1.4 -1.3 1.4" fill="none" stroke="#3a3a3a" stroke-width="0.8"/><ellipse cx="20.9" cy="212.82" rx="2.9" ry="1.5" fill="#6f7a88"/><ellipse cx="20.9" cy="211.72" rx="2.9" ry="1.5" fill="#d0d6de" stroke="#6f7a88" stroke-width="0.45"/><ellipse cx="20.9" cy="210.42" rx="2.9" ry="1.5" fill="#aab3bf" stroke="#6f7a88" stroke-width="0.45"/><text x="25.3" y="213.22" font-size="5.1" fill="#4a4a4a" font-weight="normal" font-family="Liberation Sans" textLength="48.82" lengthAdjust="spacingAndGlyphs">SITE SITE-PIPING-AREA01</text><path d="M12.4 217.24 l1.3 1.4 -1.3 1.4" fill="none" stroke="#3a3a3a" stroke-width="0.8"/><ellipse cx="20.9" cy="219.74" rx="2.9" ry="1.5" fill="#6f7a88"/><ellipse cx="20.9" cy="218.64" rx="2.9" ry="1.5" fill="#d0d6de" stroke="#6f7a88" stroke-width="0.45"/><ellipse cx="20.9" cy="217.34" rx="2.9" ry="1.5" fill="#aab3bf" stroke="#6f7a88" stroke-width="0.45"/><text x="25.3" y="220.14" font-size="5.1" fill="#4a4a4a" font-weight="normal" font-family="Liberation Sans" textLength="48.82" lengthAdjust="spacingAndGlyphs">SITE SITE-PIPING-AREA02</text><path d="M12.4 224.16 l1.3 1.4 -1.3 1.4" fill="none" stroke="#3a3a3a" stroke-width="0.8"/><ellipse cx="20.9" cy="226.66" rx="2.9" ry="1.5" fill="#6f7a88"/><ellipse cx="20.9" cy="225.56" rx="2.9" ry="1.5" fill="#d0d6de" stroke="#6f7a88" stroke-width="0.45"/><ellipse cx="20.9" cy="224.26" rx="2.9" ry="1.5" fill="#aab3bf" stroke="#6f7a88" stroke-width="0.45"/><text x="25.3" y="227.06" font-size="5.1" fill="#4a4a4a" font-weight="normal" font-family="Liberation Sans" textLength="48.82" lengthAdjust="spacingAndGlyphs">SITE SITE-PIPING-AREA03</text><path d="M12.4 231.08 l1.3 1.4 -1.3 1.4" fill="none" stroke="#3a3a3a" stroke-width="0.8"/><ellipse cx="20.9" cy="233.58" rx="2.9" ry="1.5" fill="#6f7a88"/><ellipse cx="20.9" cy="232.48" rx="2.9" ry="1.5" fill="#d0d6de" stroke="#6f7a88" stroke-width="0.45"/><ellipse cx="20.9" cy="231.18" rx="2.9" ry="1.5" fill="#aab3bf" stroke="#6f7a88" stroke-width="0.45"/><text x="25.3" y="233.98" font-size="5.1" fill="#4a4a4a" font-weight="normal" font-family="Liberation Sans" textLength="48.39" lengthAdjust="spacingAndGlyphs">SITE SITE-CABLE-AREA01</text><path d="M12.4 238.00 l1.3 1.4 -1.3 1.4" fill="none" stroke="#3a3a3a" stroke-width="0.8"/><ellipse cx="20.9" cy="240.50" rx="2.9" ry="1.5" fill="#6f7a88"/><ellipse cx="20.9" cy="239.40" rx="2.9" ry="1.5" fill="#d0d6de" stroke="#6f7a88" stroke-width="0.45"/><ellipse cx="20.9" cy="238.10" rx="2.9" ry="1.5" fill="#aab3bf" stroke="#6f7a88" stroke-width="0.45"/><text x="25.3" y="240.90" font-size="5.1" fill="#4a4a4a" font-weight="normal" font-family="Liberation Sans" textLength="48.39" lengthAdjust="spacingAndGlyphs">SITE SITE-CABLE-AREA02</text><path d="M12.4 244.92 l1.3 1.4 -1.3 1.4" fill="none" stroke="#3a3a3a" stroke-width="0.8"/><ellipse cx="20.9" cy="247.42" rx="2.9" ry="1.5" fill="#6f7a88"/><ellipse cx="20.9" cy="246.32" rx="2.9" ry="1.5" fill="#d0d6de" stroke="#6f7a88" stroke-width="0.45"/><ellipse cx="20.9" cy="245.02" rx="2.9" ry="1.5" fill="#aab3bf" stroke="#6f7a88" stroke-width="0.45"/><text x="25.3" y="247.82" font-size="5.1" fill="#4a4a4a" font-weight="normal" font-family="Liberation Sans" textLength="48.39" lengthAdjust="spacingAndGlyphs">SITE SITE-CABLE-AREA03</text><path d="M12.4 251.84 l1.3 1.4 -1.3 1.4" fill="none" stroke="#3a3a3a" stroke-width="0.8"/><ellipse cx="20.9" cy="254.34" rx="2.9" ry="1.5" fill="#6f7a88"/><ellipse cx="20.9" cy="253.24" rx="2.9" ry="1.5" fill="#d0d6de" stroke="#6f7a88" stroke-width="0.45"/><ellipse cx="20.9" cy="251.94" rx="2.9" ry="1.5" fill="#aab3bf" stroke="#6f7a88" stroke-width="0.45"/><text x="25.3" y="254.74" font-size="5.1" fill="#4a4a4a" font-weight="normal" font-family="Liberation Sans" textLength="45.38" lengthAdjust="spacingAndGlyphs">SITE SITE-CIVIL-AREA01</text><path d="M12.4 258.76 l1.3 1.4 -1.3 1.4" fill="none" stroke="#3a3a3a" stroke-width="0.8"/><ellipse cx="20.9" cy="261.26" rx="2.9" ry="1.5" fill="#6f7a88"/><ellipse cx="20.9" cy="260.16" rx="2.9" ry="1.5" fill="#d0d6de" stroke="#6f7a88" stroke-width="0.45"/><ellipse cx="20.9" cy="258.86" rx="2.9" ry="1.5" fill="#aab3bf" stroke="#6f7a88" stroke-width="0.45"/><text x="25.3" y="261.66" font-size="5.1" fill="#4a4a4a" font-weight="normal" font-family="Liberation Sans" textLength="45.38" lengthAdjust="spacingAndGlyphs">SITE SITE-CIVIL-AREA02</text><path d="M12.4 265.68 l1.3 1.4 -1.3 1.4" fill="none" stroke="#3a3a3a" stroke-width="0.8"/><ellipse cx="20.9" cy="268.18" rx="2.9" ry="1.5" fill="#6f7a88"/><ellipse cx="20.9" cy="267.08" rx="2.9" ry="1.5" fill="#d0d6de" stroke="#6f7a88" stroke-width="0.45"/><ellipse cx="20.9" cy="265.78" rx="2.9" ry="1.5" fill="#aab3bf" stroke="#6f7a88" stroke-width="0.45"/><text x="25.3" y="268.58" font-size="5.1" fill="#4a4a4a" font-weight="normal" font-family="Liberation Sans" textLength="45.38" lengthAdjust="spacingAndGlyphs">SITE SITE-CIVIL-AREA03</text><rect x="18.3" y="271.30" width="5" height="5.2" fill="#e8eef6" stroke="#5a6a80" stroke-width="0.5"/><rect x="20.8" y="274.10" width="2.6" height="2.4" fill="#2d5da0"/><text x="25.3" y="275.50" font-size="5.1" fill="#4a4a4a" font-weight="normal" font-family="Liberation Sans" textLength="46.16" lengthAdjust="spacingAndGlyphs">DTHRLD DETAIL-AREA01</text><path d="M12.4 279.52 l1.3 1.4 -1.3 1.4" fill="none" stroke="#3a3a3a" stroke-width="0.8"/><rect x="18.3" y="278.22" width="5" height="5.2" fill="#e8eef6" stroke="#5a6a80" stroke-width="0.5"/><rect x="20.8" y="281.02" width="2.6" height="2.4" fill="#2d5da0"/><text x="25.3" y="282.42" font-size="5.1" fill="#4a4a4a" font-weight="normal" font-family="Liberation Sans" textLength="46.16" lengthAdjust="spacingAndGlyphs">DTHRLD DETAIL-AREA02</text><path d="M12.4 286.44 l1.3 1.4 -1.3 1.4" fill="none" stroke="#3a3a3a" stroke-width="0.8"/><rect x="18.3" y="285.14" width="5" height="5.2" fill="#e8eef6" stroke="#5a6a80" stroke-width="0.5"/><rect x="20.8" y="287.94" width="2.6" height="2.4" fill="#2d5da0"/><text x="25.3" y="289.34" font-size="5.1" fill="#4a4a4a" font-weight="normal" font-family="Liberation Sans" textLength="63.36" lengthAdjust="spacingAndGlyphs">BMFHPL DETAIL-AREA02-A-DRWG</text><rect x="18.3" y="292.06" width="5" height="5.2" fill="#e8eef6" stroke="#5a6a80" stroke-width="0.5"/><rect x="20.8" y="294.86" width="2.6" height="2.4" fill="#2d5da0"/><text x="25.3" y="296.26" font-size="5.1" fill="#4a4a4a" font-weight="normal" font-family="Liberation Sans" textLength="46.16" lengthAdjust="spacingAndGlyphs">DTHRLD DETAIL-AREA03</text><path d="M12.4 300.28 l1.3 1.4 -1.3 1.4" fill="none" stroke="#3a3a3a" stroke-width="0.8"/><ellipse cx="20.9" cy="302.78" rx="2.9" ry="1.5" fill="#6f7a88"/><ellipse cx="20.9" cy="301.68" rx="2.9" ry="1.5" fill="#d0d6de" stroke="#6f7a88" stroke-width="0.45"/><ellipse cx="20.9" cy="300.38" rx="2.9" ry="1.5" fill="#aab3bf" stroke="#6f7a88" stroke-width="0.45"/><text x="25.3" y="303.18" font-size="5.1" fill="#4a4a4a" font-weight="normal" font-family="Liberation Sans" textLength="58.49" lengthAdjust="spacingAndGlyphs">SITE SITE-EQUIPMENT-AREA01</text><path d="M12.4 307.20 l1.3 1.4 -1.3 1.4" fill="none" stroke="#3a3a3a" stroke-width="0.8"/><ellipse cx="20.9" cy="309.70" rx="2.9" ry="1.5" fill="#6f7a88"/><ellipse cx="20.9" cy="308.60" rx="2.9" ry="1.5" fill="#d0d6de" stroke="#6f7a88" stroke-width="0.45"/><ellipse cx="20.9" cy="307.30" rx="2.9" ry="1.5" fill="#aab3bf" stroke="#6f7a88" stroke-width="0.45"/><text x="25.3" y="310.10" font-size="5.1" fill="#4a4a4a" font-weight="normal" font-family="Liberation Sans" textLength="58.49" lengthAdjust="spacingAndGlyphs">SITE SITE-EQUIPMENT-AREA02</text><path d="M12.4 314.12 l1.3 1.4 -1.3 1.4" fill="none" stroke="#3a3a3a" stroke-width="0.8"/><ellipse cx="20.9" cy="316.62" rx="2.9" ry="1.5" fill="#6f7a88"/><ellipse cx="20.9" cy="315.52" rx="2.9" ry="1.5" fill="#d0d6de" stroke="#6f7a88" stroke-width="0.45"/><ellipse cx="20.9" cy="314.22" rx="2.9" ry="1.5" fill="#aab3bf" stroke="#6f7a88" stroke-width="0.45"/><text x="25.3" y="317.02" font-size="5.1" fill="#4a4a4a" font-weight="normal" font-family="Liberation Sans" textLength="58.49" lengthAdjust="spacingAndGlyphs">SITE SITE-EQUIPMENT-AREA03</text><path d="M12.4 321.04 l1.3 1.4 -1.3 1.4" fill="none" stroke="#3a3a3a" stroke-width="0.8"/><ellipse cx="20.9" cy="323.54" rx="2.9" ry="1.5" fill="#6f7a88"/><ellipse cx="20.9" cy="322.44" rx="2.9" ry="1.5" fill="#d0d6de" stroke="#6f7a88" stroke-width="0.45"/><ellipse cx="20.9" cy="321.14" rx="2.9" ry="1.5" fill="#aab3bf" stroke="#6f7a88" stroke-width="0.45"/><text x="25.3" y="323.94" font-size="5.1" fill="#4a4a4a" font-weight="normal" font-family="Liberation Sans" textLength="59.57" lengthAdjust="spacingAndGlyphs">SITE SITE-ELECTRICAL-AREA01</text><path d="M12.4 327.96 l1.3 1.4 -1.3 1.4" fill="none" stroke="#3a3a3a" stroke-width="0.8"/><ellipse cx="20.9" cy="330.46" rx="2.9" ry="1.5" fill="#6f7a88"/><ellipse cx="20.9" cy="329.36" rx="2.9" ry="1.5" fill="#d0d6de" stroke="#6f7a88" stroke-width="0.45"/><ellipse cx="20.9" cy="328.06" rx="2.9" ry="1.5" fill="#aab3bf" stroke="#6f7a88" stroke-width="0.45"/><text x="25.3" y="330.86" font-size="5.1" fill="#4a4a4a" font-weight="normal" font-family="Liberation Sans" textLength="59.57" lengthAdjust="spacingAndGlyphs">SITE SITE-ELECTRICAL-AREA02</text><path d="M12.4 334.88 l1.3 1.4 -1.3 1.4" fill="none" stroke="#3a3a3a" stroke-width="0.8"/><ellipse cx="20.9" cy="337.38" rx="2.9" ry="1.5" fill="#6f7a88"/><ellipse cx="20.9" cy="336.28" rx="2.9" ry="1.5" fill="#d0d6de" stroke="#6f7a88" stroke-width="0.45"/><ellipse cx="20.9" cy="334.98" rx="2.9" ry="1.5" fill="#aab3bf" stroke="#6f7a88" stroke-width="0.45"/><text x="25.3" y="337.78" font-size="5.1" fill="#4a4a4a" font-weight="normal" font-family="Liberation Sans" textLength="59.57" lengthAdjust="spacingAndGlyphs">SITE SITE-ELECTRICAL-AREA03</text><ellipse cx="20.9" cy="344.30" rx="2.9" ry="1.5" fill="#6f7a88"/><ellipse cx="20.9" cy="343.20" rx="2.9" ry="1.5" fill="#d0d6de" stroke="#6f7a88" stroke-width="0.45"/><ellipse cx="20.9" cy="341.90" rx="2.9" ry="1.5" fill="#aab3bf" stroke="#6f7a88" stroke-width="0.45"/><text x="25.3" y="344.70" font-size="5.1" fill="#4a4a4a" font-weight="normal" font-family="Liberation Sans" textLength="46.16" lengthAdjust="spacingAndGlyphs">SITE SITE-HVAC-AREA01</text><path d="M12.4 348.72 l1.3 1.4 -1.3 1.4" fill="none" stroke="#3a3a3a" stroke-width="0.8"/><ellipse cx="20.9" cy="351.22" rx="2.9" ry="1.5" fill="#6f7a88"/><ellipse cx="20.9" cy="350.12" rx="2.9" ry="1.5" fill="#d0d6de" stroke="#6f7a88" stroke-width="0.45"/><ellipse cx="20.9" cy="348.82" rx="2.9" ry="1.5" fill="#aab3bf" stroke="#6f7a88" stroke-width="0.45"/><text x="25.3" y="351.62" font-size="5.1" fill="#4a4a4a" font-weight="normal" font-family="Liberation Sans" textLength="46.16" lengthAdjust="spacingAndGlyphs">SITE SITE-HVAC-AREA02</text><ellipse cx="20.9" cy="358.14" rx="2.9" ry="1.5" fill="#6f7a88"/><ellipse cx="20.9" cy="357.04" rx="2.9" ry="1.5" fill="#d0d6de" stroke="#6f7a88" stroke-width="0.45"/><ellipse cx="20.9" cy="355.74" rx="2.9" ry="1.5" fill="#aab3bf" stroke="#6f7a88" stroke-width="0.45"/><text x="25.3" y="358.54" font-size="5.1" fill="#4a4a4a" font-weight="normal" font-family="Liberation Sans" textLength="46.16" lengthAdjust="spacingAndGlyphs">SITE SITE-HVAC-AREA03</text><ellipse cx="20.9" cy="365.06" rx="2.9" ry="1.5" fill="#6f7a88"/><ellipse cx="20.9" cy="363.96" rx="2.9" ry="1.5" fill="#d0d6de" stroke="#6f7a88" stroke-width="0.45"/><ellipse cx="20.9" cy="362.66" rx="2.9" ry="1.5" fill="#aab3bf" stroke="#6f7a88" stroke-width="0.45"/><text x="25.3" y="365.46" font-size="5.1" fill="#4a4a4a" font-weight="normal" font-family="Liberation Sans" textLength="47.74" lengthAdjust="spacingAndGlyphs">SITE SITE-ROOM-AREA01</text><ellipse cx="20.9" cy="371.98" rx="2.9" ry="1.5" fill="#6f7a88"/><ellipse cx="20.9" cy="370.88" rx="2.9" ry="1.5" fill="#d0d6de" stroke="#6f7a88" stroke-width="0.45"/><ellipse cx="20.9" cy="369.58" rx="2.9" ry="1.5" fill="#aab3bf" stroke="#6f7a88" stroke-width="0.45"/><text x="25.3" y="372.38" font-size="5.1" fill="#4a4a4a" font-weight="normal" font-family="Liberation Sans" textLength="47.74" lengthAdjust="spacingAndGlyphs">SITE SITE-ROOM-AREA02</text><ellipse cx="20.9" cy="378.90" rx="2.9" ry="1.5" fill="#6f7a88"/><ellipse cx="20.9" cy="377.80" rx="2.9" ry="1.5" fill="#d0d6de" stroke="#6f7a88" stroke-width="0.45"/><ellipse cx="20.9" cy="376.50" rx="2.9" ry="1.5" fill="#aab3bf" stroke="#6f7a88" stroke-width="0.45"/><text x="25.3" y="379.30" font-size="5.1" fill="#4a4a4a" font-weight="normal" font-family="Liberation Sans" textLength="47.74" lengthAdjust="spacingAndGlyphs">SITE SITE-ROOM-AREA03</text><path d="M12.4 383.32 l1.3 1.4 -1.3 1.4" fill="none" stroke="#3a3a3a" stroke-width="0.8"/><ellipse cx="20.9" cy="385.82" rx="2.9" ry="1.5" fill="#6f7a88"/><ellipse cx="20.9" cy="384.72" rx="2.9" ry="1.5" fill="#d0d6de" stroke="#6f7a88" stroke-width="0.45"/><ellipse cx="20.9" cy="383.42" rx="2.9" ry="1.5" fill="#aab3bf" stroke="#6f7a88" stroke-width="0.45"/><text x="25.3" y="386.22" font-size="5.1" fill="#4a4a4a" font-weight="normal" font-family="Liberation Sans" textLength="61.72" lengthAdjust="spacingAndGlyphs">SITE SITE-STRUCTURAL-AREA01</text><path d="M12.4 390.24 l1.3 1.4 -1.3 1.4" fill="none" stroke="#3a3a3a" stroke-width="0.8"/><ellipse cx="20.9" cy="392.74" rx="2.9" ry="1.5" fill="#6f7a88"/><ellipse cx="20.9" cy="391.64" rx="2.9" ry="1.5" fill="#d0d6de" stroke="#6f7a88" stroke-width="0.45"/><ellipse cx="20.9" cy="390.34" rx="2.9" ry="1.5" fill="#aab3bf" stroke="#6f7a88" stroke-width="0.45"/><text x="25.3" y="393.14" font-size="5.1" fill="#4a4a4a" font-weight="normal" font-family="Liberation Sans" textLength="61.72" lengthAdjust="spacingAndGlyphs">SITE SITE-STRUCTURAL-AREA02</text><path d="M12.4 397.16 l1.3 1.4 -1.3 1.4" fill="none" stroke="#3a3a3a" stroke-width="0.8"/><ellipse cx="20.9" cy="399.66" rx="2.9" ry="1.5" fill="#6f7a88"/><ellipse cx="20.9" cy="398.56" rx="2.9" ry="1.5" fill="#d0d6de" stroke="#6f7a88" stroke-width="0.45"/><ellipse cx="20.9" cy="397.26" rx="2.9" ry="1.5" fill="#aab3bf" stroke="#6f7a88" stroke-width="0.45"/><text x="25.3" y="400.06" font-size="5.1" fill="#4a4a4a" font-weight="normal" font-family="Liberation Sans" textLength="61.72" lengthAdjust="spacingAndGlyphs">SITE SITE-STRUCTURAL-AREA03</text><path d="M12.4 404.08 l1.3 1.4 -1.3 1.4" fill="none" stroke="#3a3a3a" stroke-width="0.8"/><ellipse cx="20.9" cy="406.58" rx="2.9" ry="1.5" fill="#6f7a88"/><ellipse cx="20.9" cy="405.48" rx="2.9" ry="1.5" fill="#d0d6de" stroke="#6f7a88" stroke-width="0.45"/><ellipse cx="20.9" cy="404.18" rx="2.9" ry="1.5" fill="#aab3bf" stroke="#6f7a88" stroke-width="0.45"/><text x="25.3" y="406.98" font-size="5.1" fill="#4a4a4a" font-weight="normal" font-family="Liberation Sans" textLength="56.92" lengthAdjust="spacingAndGlyphs">SITE SITE-SUPPORTS-AREA01</text></g></svg>
<div class="a" style="left:116px;top:120px;width:1.2px;height:287px;background:#e4e4e6;"></div>
<div class="a" style="left:117.2px;top:120px;width:10px;height:289px;background:#f3f4f6;"></div>
<div class="a" style="left:117.5px;top:121px;width:8.8px;height:47px;background:#dde3ef;"></div>
<svg style="left:0;top:0" width="130" height="420"><text transform="translate(123.8 159) rotate(-90)" font-size="5" fill="#2e2e2e" font-family="Liberation Sans" textLength="27.5" lengthAdjust="spacingAndGlyphs">Model Explorer</text><path d="M120.5 163.8 l2.4 2.4 M122.9 163.8 l-2.4 2.4" stroke="#111" stroke-width="0.7"/><path d="M120.5 123.5 v3.5 h2.5 M120.5 125.2 h2.5" fill="none" stroke="#3b4556" stroke-width="0.7"/><circle cx="121" cy="122.8" r="0.9" fill="#4f8fd8"/><circle cx="123.6" cy="125.2" r="0.9" fill="#4f8fd8"/><circle cx="123.6" cy="127.2" r="0.9" fill="#4f8fd8"/></svg>
<div class="a" style="left:127px;top:120px;width:526.5px;height:289px;background:linear-gradient(180deg,#64776f 0%,#82918c 21%,#9ba6a2 38%,#b5bdba 55%,#c9cfcd 76%,#ebeceb 100%)"></div>
<div class="a" style="left:127px;top:120px;width:527px;height:0.9px;background:#8e9592;"></div>
<svg style="left:0;top:0" width="664" height="420"><defs><clipPath id="vp"><rect x="128" y="121" width="525" height="287"/></clipPath><filter id="tex" x="0" y="0" width="664" height="420" filterUnits="userSpaceOnUse"><feTurbulence type="fractalNoise" baseFrequency="0.85" numOctaves="2" seed="7" result="n"/><feColorMatrix in="n" type="matrix" values="0.33 0.33 0.33 0 0  0.33 0.33 0.33 0 0  0.33 0.33 0.33 0 0  0 0 0 0 1" result="g"/><feComposite in="SourceGraphic" in2="g" operator="arithmetic" k1="1.7" k2="0.2" k3="0" k4="0" result="c"/><feComposite in="c" in2="SourceAlpha" operator="in"/></filter><pattern id="grt" width="2.2" height="2.2" patternUnits="userSpaceOnUse" patternTransform="rotate(-25)"><rect width="2.2" height="2.2" fill="#55534c"/><path d="M0 0.6 H2.2 M1.1 0 V2.2" stroke="#cfcdc4" stroke-width="0.65"/></pattern></defs><g clip-path="url(#vp)"><g filter="url(#tex)"><path d="M127.5 208.3 L154 194.5 L151.5 199 Q141 205 128 210.5z" fill="#2a2722"/><circle cx="131" cy="209.5" r="0.7" fill="#333"/><circle cx="140.5" cy="208.8" r="0.6" fill="#444"/><circle cx="144.5" cy="209.3" r="0.7" fill="#333"/><path d="M127.5 300.5 L139 306.5 L127.5 311z" fill="#4a3a2e"/><path d="M205.6 203 v8" fill="none" stroke="#3a3630" stroke-width="1" stroke-opacity="1" stroke-linecap="butt" stroke-linejoin="round"/><path d="M293.8 118 V174" fill="none" stroke="#e6e9e6" stroke-opacity="0.3" stroke-width="8.9" stroke-linecap="butt" stroke-linejoin="round"/><path d="M293.8 118 V174" fill="none" stroke="#2a2722" stroke-width="7.5" stroke-linecap="butt" stroke-linejoin="round"/><path d="M293.8 118 V174" fill="none" stroke="#47433b" stroke-width="5.25" stroke-linecap="butt" stroke-linejoin="round" transform="translate(0 -0.75)"/><path d="M293.8 118 V174" fill="none" stroke="#78725f" stroke-width="1.95" stroke-linecap="butt" stroke-linejoin="round" transform="translate(0 -1.65)" opacity="0.9"/><rect x="289.5" y="120" width="8.5" height="3.5" fill="#2a2722"/><path d="M306 185 L358 196 L400 215 L390 221 L346 202 L306 192z" fill="#6f6a5e" opacity="0.75"/><path d="M305.7 160.5 L358 171" fill="none" stroke="#70451a" stroke-width="1.7" stroke-opacity="0.6" stroke-linecap="butt" stroke-linejoin="round"/><path d="M305.7 160.5 L358 171" fill="none" stroke="#b97f2e" stroke-width="1.2" stroke-opacity="1" stroke-linecap="butt" stroke-linejoin="round"/><path d="M305.7 172.5 L358 183.0" fill="none" stroke="#b97f2e" stroke-width="1.02" stroke-opacity="0.95" stroke-linecap="butt" stroke-linejoin="round"/><path d="M305.7 184.5 L358 195" fill="none" stroke="#70451a" stroke-width="1.08" stroke-opacity="0.9" stroke-linecap="butt" stroke-linejoin="round"/><path d="M305.7 160.5 v24" fill="none" stroke="#b97f2e" stroke-width="1.2" stroke-opacity="1" stroke-linecap="butt" stroke-linejoin="round"/><path d="M318.8 163.1 v24" fill="none" stroke="#b97f2e" stroke-width="1.2" stroke-opacity="1" stroke-linecap="butt" stroke-linejoin="round"/><path d="M331.9 165.8 v24" fill="none" stroke="#b97f2e" stroke-width="1.2" stroke-opacity="1" stroke-linecap="butt" stroke-linejoin="round"/><path d="M344.9 168.4 v24" fill="none" stroke="#b97f2e" stroke-width="1.2" stroke-opacity="1" stroke-linecap="butt" stroke-linejoin="round"/><path d="M358.0 171.0 v24" fill="none" stroke="#b97f2e" stroke-width="1.2" stroke-opacity="1" stroke-linecap="butt" stroke-linejoin="round"/><path d="M305.7 160.5 L320 153.3" fill="none" stroke="#70451a" stroke-width="1.7" stroke-opacity="0.6" stroke-linecap="butt" stroke-linejoin="round"/><path d="M305.7 160.5 L320 153.3" fill="none" stroke="#b97f2e" stroke-width="1.2" stroke-opacity="1" stroke-linecap="butt" stroke-linejoin="round"/><path d="M305.7 171.5 L320 164.3" fill="none" stroke="#b97f2e" stroke-width="1.02" stroke-opacity="0.95" stroke-linecap="butt" stroke-linejoin="round"/><path d="M305.7 182.5 L320 175.3" fill="none" stroke="#70451a" stroke-width="1.08" stroke-opacity="0.9" stroke-linecap="butt" stroke-linejoin="round"/><path d="M305.7 160.5 v22" fill="none" stroke="#b97f2e" stroke-width="1.2" stroke-opacity="1" stroke-linecap="butt" stroke-linejoin="round"/><path d="M320.0 153.3 v22" fill="none" stroke="#b97f2e" stroke-width="1.2" stroke-opacity="1" stroke-linecap="butt" stroke-linejoin="round"/><path d="M361 173 L400 193" fill="none" stroke="#70451a" stroke-width="1.7" stroke-opacity="0.6" stroke-linecap="butt" stroke-linejoin="round"/><path d="M361 173 L400 193" fill="none" stroke="#b97f2e" stroke-width="1.2" stroke-opacity="1" stroke-linecap="butt" stroke-linejoin="round"/><path d="M361 184.0 L400 204.0" fill="none" stroke="#b97f2e" stroke-width="1.02" stroke-opacity="0.95" stroke-linecap="butt" stroke-linejoin="round"/><path d="M361 195 L400 215" fill="none" stroke="#70451a" stroke-width="1.08" stroke-opacity="0.9" stroke-linecap="butt" stroke-linejoin="round"/><path d="M361.0 173.0 v22" fill="none" stroke="#b97f2e" stroke-width="1.2" stroke-opacity="1" stroke-linecap="butt" stroke-linejoin="round"/><path d="M374.0 179.7 v22" fill="none" stroke="#b97f2e" stroke-width="1.2" stroke-opacity="1" stroke-linecap="butt" stroke-linejoin="round"/><path d="M387.0 186.3 v22" fill="none" stroke="#b97f2e" stroke-width="1.2" stroke-opacity="1" stroke-linecap="butt" stroke-linejoin="round"/><path d="M400.0 193.0 v22" fill="none" stroke="#b97f2e" stroke-width="1.2" stroke-opacity="1" stroke-linecap="butt" stroke-linejoin="round"/><path d="M362.7 174 L470 227" fill="none" stroke="#70451a" stroke-width="1.7" stroke-opacity="0.6" stroke-linecap="butt" stroke-linejoin="round"/><path d="M362.7 174 L470 227" fill="none" stroke="#b97f2e" stroke-width="1.2" stroke-opacity="1" stroke-linecap="butt" stroke-linejoin="round"/><path d="M362.7 186.0 L470 239.0" fill="none" stroke="#b97f2e" stroke-width="1.02" stroke-opacity="0.95" stroke-linecap="butt" stroke-linejoin="round"/><path d="M362.7 198 L470 251" fill="none" stroke="#70451a" stroke-width="1.08" stroke-opacity="0.9" stroke-linecap="butt" stroke-linejoin="round"/><path d="M362.7 174.0 v24" fill="none" stroke="#b97f2e" stroke-width="1.2" stroke-opacity="1" stroke-linecap="butt" stroke-linejoin="round"/><path d="M378.0 181.6 v24" fill="none" stroke="#b97f2e" stroke-width="1.2" stroke-opacity="1" stroke-linecap="butt" stroke-linejoin="round"/><path d="M393.4 189.1 v24" fill="none" stroke="#b97f2e" stroke-width="1.2" stroke-opacity="1" stroke-linecap="butt" stroke-linejoin="round"/><path d="M408.7 196.7 v24" fill="none" stroke="#b97f2e" stroke-width="1.2" stroke-opacity="1" stroke-linecap="butt" stroke-linejoin="round"/><path d="M424.0 204.3 v24" fill="none" stroke="#b97f2e" stroke-width="1.2" stroke-opacity="1" stroke-linecap="butt" stroke-linejoin="round"/><path d="M439.3 211.9 v24" fill="none" stroke="#b97f2e" stroke-width="1.2" stroke-opacity="1" stroke-linecap="butt" stroke-linejoin="round"/><path d="M454.7 219.4 v24" fill="none" stroke="#b97f2e" stroke-width="1.2" stroke-opacity="1" stroke-linecap="butt" stroke-linejoin="round"/><path d="M470.0 227.0 v24" fill="none" stroke="#b97f2e" stroke-width="1.2" stroke-opacity="1" stroke-linecap="butt" stroke-linejoin="round"/><path d="M213.5 183.5 L239 166.5 Q250 159 263 162 L292 175" fill="none" stroke="#e6e9e6" stroke-opacity="0.3" stroke-width="14.9" stroke-linecap="round" stroke-linejoin="round"/><path d="M213.5 183.5 L239 166.5 Q250 159 263 162 L292 175" fill="none" stroke="#2a2722" stroke-width="13.5" stroke-linecap="round" stroke-linejoin="round"/><path d="M213.5 183.5 L239 166.5 Q250 159 263 162 L292 175" fill="none" stroke="#4a463e" stroke-width="9.45" stroke-linecap="round" stroke-linejoin="round" transform="translate(0 -1.35)"/><path d="M213.5 183.5 L239 166.5 Q250 159 263 162 L292 175" fill="none" stroke="#8c8775" stroke-width="3.51" stroke-linecap="round" stroke-linejoin="round" transform="translate(0 -2.97)" opacity="0.9"/><path d="M292 179 L342 199 L372 211 L388 219" fill="none" stroke="#e6e9e6" stroke-opacity="0.3" stroke-width="17.9" stroke-linecap="butt" stroke-linejoin="round"/><path d="M292 179 L342 199 L372 211 L388 219" fill="none" stroke="#2a2722" stroke-width="16.5" stroke-linecap="butt" stroke-linejoin="round"/><path d="M292 179 L342 199 L372 211 L388 219" fill="none" stroke="#4e4a42" stroke-width="11.55" stroke-linecap="butt" stroke-linejoin="round" transform="translate(0 -1.65)"/><path d="M292 179 L342 199 L372 211 L388 219" fill="none" stroke="#8f8a78" stroke-width="4.29" stroke-linecap="butt" stroke-linejoin="round" transform="translate(0 -3.63)" opacity="0.9"/><ellipse cx="213.5" cy="184" rx="6.8" ry="4.6" transform="rotate(-32 213.5 184)" fill="#24211c"/><ellipse cx="297" cy="180" rx="8" ry="10" fill="#5a5549" stroke="#2c2823" stroke-width="1.6"/><ellipse cx="296" cy="177.5" rx="4" ry="4.5" fill="#8e8876"/><path d="M280 184 L300 183 L310 189 L307 200 L288 201 L279 194z" fill="#4d4840" opacity="1"/><circle cx="290" cy="191" r="4.2" fill="#7b7568"/><path d="M307 196 V221" fill="none" stroke="#2f2b25" stroke-width="4.2" stroke-opacity="1" stroke-linecap="butt" stroke-linejoin="round"/><path d="M255 205 L279 196 L286 203 L262 212z" fill="#4a463e" opacity="0.9"/><path d="M256 186 L278 176" fill="none" stroke="#70451a" stroke-width="1.7" stroke-opacity="0.6" stroke-linecap="butt" stroke-linejoin="round"/><path d="M256 186 L278 176" fill="none" stroke="#b97f2e" stroke-width="1.2" stroke-opacity="1" stroke-linecap="butt" stroke-linejoin="round"/><path d="M256 195.0 L278 185.0" fill="none" stroke="#b97f2e" stroke-width="1.02" stroke-opacity="0.95" stroke-linecap="butt" stroke-linejoin="round"/><path d="M256 204 L278 194" fill="none" stroke="#70451a" stroke-width="1.08" stroke-opacity="0.9" stroke-linecap="butt" stroke-linejoin="round"/><path d="M256.0 186.0 v18" fill="none" stroke="#b97f2e" stroke-width="1.2" stroke-opacity="1" stroke-linecap="butt" stroke-linejoin="round"/><path d="M267.0 181.0 v18" fill="none" stroke="#b97f2e" stroke-width="1.2" stroke-opacity="1" stroke-linecap="butt" stroke-linejoin="round"/><path d="M278.0 176.0 v18" fill="none" stroke="#b97f2e" stroke-width="1.2" stroke-opacity="1" stroke-linecap="butt" stroke-linejoin="round"/><path d="M262 192 L288 181" fill="none" stroke="#70451a" stroke-width="1.7" stroke-opacity="0.6" stroke-linecap="butt" stroke-linejoin="round"/><path d="M262 192 L288 181" fill="none" stroke="#b97f2e" stroke-width="1.2" stroke-opacity="1" stroke-linecap="butt" stroke-linejoin="round"/><path d="M262 201.0 L288 190.0" fill="none" stroke="#b97f2e" stroke-width="1.02" stroke-opacity="0.95" stroke-linecap="butt" stroke-linejoin="round"/><path d="M262.0 192.0 v18" fill="none" stroke="#b97f2e" stroke-width="1.2" stroke-opacity="1" stroke-linecap="butt" stroke-linejoin="round"/><path d="M275.0 186.5 v18" fill="none" stroke="#b97f2e" stroke-width="1.2" stroke-opacity="1" stroke-linecap="butt" stroke-linejoin="round"/><path d="M288.0 181.0 v18" fill="none" stroke="#b97f2e" stroke-width="1.2" stroke-opacity="1" stroke-linecap="butt" stroke-linejoin="round"/><path d="M256 186 L262 192 M278 176 L288 181" fill="none" stroke="#b97f2e" stroke-width="1.1" stroke-opacity="1" stroke-linecap="butt" stroke-linejoin="round"/><path d="M326 212 L346 201" fill="none" stroke="#70451a" stroke-width="1.7" stroke-opacity="0.6" stroke-linecap="butt" stroke-linejoin="round"/><path d="M326 212 L346 201" fill="none" stroke="#b97f2e" stroke-width="1.2" stroke-opacity="1" stroke-linecap="butt" stroke-linejoin="round"/><path d="M326 222.0 L346 211.0" fill="none" stroke="#b97f2e" stroke-width="1.02" stroke-opacity="0.95" stroke-linecap="butt" stroke-linejoin="round"/><path d="M326 232 L346 221" fill="none" stroke="#70451a" stroke-width="1.08" stroke-opacity="0.9" stroke-linecap="butt" stroke-linejoin="round"/><path d="M326.0 212.0 v20" fill="none" stroke="#b97f2e" stroke-width="1.2" stroke-opacity="1" stroke-linecap="butt" stroke-linejoin="round"/><path d="M336.0 206.5 v20" fill="none" stroke="#b97f2e" stroke-width="1.2" stroke-opacity="1" stroke-linecap="butt" stroke-linejoin="round"/><path d="M346.0 201.0 v20" fill="none" stroke="#b97f2e" stroke-width="1.2" stroke-opacity="1" stroke-linecap="butt" stroke-linejoin="round"/><path d="M346 201 L368 210" fill="none" stroke="#70451a" stroke-width="1.7" stroke-opacity="0.6" stroke-linecap="butt" stroke-linejoin="round"/><path d="M346 201 L368 210" fill="none" stroke="#b97f2e" stroke-width="1.2" stroke-opacity="1" stroke-linecap="butt" stroke-linejoin="round"/><path d="M346 210.0 L368 219.0" fill="none" stroke="#b97f2e" stroke-width="1.02" stroke-opacity="0.95" stroke-linecap="butt" stroke-linejoin="round"/><path d="M346 219 L368 228" fill="none" stroke="#70451a" stroke-width="1.08" stroke-opacity="0.9" stroke-linecap="butt" stroke-linejoin="round"/><path d="M346.0 201.0 v18" fill="none" stroke="#b97f2e" stroke-width="1.2" stroke-opacity="1" stroke-linecap="butt" stroke-linejoin="round"/><path d="M357.0 205.5 v18" fill="none" stroke="#b97f2e" stroke-width="1.2" stroke-opacity="1" stroke-linecap="butt" stroke-linejoin="round"/><path d="M368.0 210.0 v18" fill="none" stroke="#b97f2e" stroke-width="1.2" stroke-opacity="1" stroke-linecap="butt" stroke-linejoin="round"/><path d="M262 190 V232 M268 188 V230" fill="none" stroke="#70451a" stroke-width="1.2" stroke-opacity="0.9" stroke-linecap="butt" stroke-linejoin="round"/><path d="M260 249 V281" fill="none" stroke="#24221e" stroke-width="2.4" stroke-opacity="1" stroke-linecap="butt" stroke-linejoin="round"/><path d="M279 250 V273" fill="none" stroke="#24221e" stroke-width="2.2" stroke-opacity="1" stroke-linecap="butt" stroke-linejoin="round"/><path d="M330 228 V290" fill="none" stroke="#70451a" stroke-width="1.6" stroke-opacity="1" stroke-linecap="butt" stroke-linejoin="round"/><path d="M342 232 V288" fill="none" stroke="#70451a" stroke-width="1.4" stroke-opacity="1" stroke-linecap="butt" stroke-linejoin="round"/><path d="M372 218 L440 256 L582 331" fill="none" stroke="#e6e9e6" stroke-opacity="0.3" stroke-width="19.9" stroke-linecap="butt" stroke-linejoin="round"/><path d="M372 218 L440 256 L582 331" fill="none" stroke="#2a2722" stroke-width="18.5" stroke-linecap="butt" stroke-linejoin="round"/><path d="M372 218 L440 256 L582 331" fill="none" stroke="#5c584d" stroke-width="12.95" stroke-linecap="butt" stroke-linejoin="round" transform="translate(0 -1.85)"/><path d="M372 218 L440 256 L582 331" fill="none" stroke="#a29c88" stroke-width="4.81" stroke-linecap="butt" stroke-linejoin="round" transform="translate(0 -4.07)" opacity="0.9"/><path d="M356 198 L362 190 L373 188 L381 194 L388 205 L390 216 L384 225 L374 228 L363 222 L357 211z" fill="#55524a" opacity="0.6"/><path d="M359 195 L365 192 L369 197 L366 201 L361 200z" fill="#9d998e" opacity="1"/><path d="M374 193 L379 195 L381 201 L376 203 L373 199z" fill="#7f7b70" opacity="1"/><path d="M364 207 L370 206 L373 212 L368 216 L363 213z" fill="#aaa69a" opacity="1"/><path d="M379 209 L385 209 L387 215 L382 219 L378 215z" fill="#8e8a7e" opacity="1"/><path d="M367 220 L376 220 L378 227 L370 228z" fill="#6e6a60" opacity="1"/><path d="M364 190 L369 184 M376 189 L381 184 M387 200 L392 196 M357 203 L352 200" fill="none" stroke="#a6a296" stroke-width="1.1" stroke-opacity="1" stroke-linecap="butt" stroke-linejoin="round"/><ellipse cx="413" cy="238" rx="5.5" ry="10.5" transform="rotate(-28 413 238)" fill="#56524a" stroke="#34302a" stroke-width="1.1"/><ellipse cx="432" cy="250" rx="4.5" ry="10" transform="rotate(-28 432 250)" fill="#5e5a4e" stroke="#38342d" stroke-width="0.9"/><path d="M420 229 L430 224 L440 230 L444 238 L434 242 L424 238z" fill="#7d796f" opacity="0.8"/><ellipse cx="582" cy="329" rx="9" ry="12" transform="rotate(-30 582 329)" fill="#57524a" stroke="#2c2823" stroke-width="1.6"/><path d="M574 316 L592 320 L597 336 L580 341z" fill="#6f6a5e" opacity="0.8"/><path d="M471 239 L570 287" fill="none" stroke="#70451a" stroke-width="1.7" stroke-opacity="0.6" stroke-linecap="butt" stroke-linejoin="round"/><path d="M471 239 L570 287" fill="none" stroke="#b97f2e" stroke-width="1.2" stroke-opacity="1" stroke-linecap="butt" stroke-linejoin="round"/><path d="M471 250.0 L570 298.0" fill="none" stroke="#b97f2e" stroke-width="1.02" stroke-opacity="0.95" stroke-linecap="butt" stroke-linejoin="round"/><path d="M471 261 L570 309" fill="none" stroke="#70451a" stroke-width="1.08" stroke-opacity="0.9" stroke-linecap="butt" stroke-linejoin="round"/><path d="M471.0 239.0 v22" fill="none" stroke="#b97f2e" stroke-width="1.2" stroke-opacity="1" stroke-linecap="butt" stroke-linejoin="round"/><path d="M490.8 248.6 v22" fill="none" stroke="#b97f2e" stroke-width="1.2" stroke-opacity="1" stroke-linecap="butt" stroke-linejoin="round"/><path d="M510.6 258.2 v22" fill="none" stroke="#b97f2e" stroke-width="1.2" stroke-opacity="1" stroke-linecap="butt" stroke-linejoin="round"/><path d="M530.4 267.8 v22" fill="none" stroke="#b97f2e" stroke-width="1.2" stroke-opacity="1" stroke-linecap="butt" stroke-linejoin="round"/><path d="M550.2 277.4 v22" fill="none" stroke="#b97f2e" stroke-width="1.2" stroke-opacity="1" stroke-linecap="butt" stroke-linejoin="round"/><path d="M570.0 287.0 v22" fill="none" stroke="#b97f2e" stroke-width="1.2" stroke-opacity="1" stroke-linecap="butt" stroke-linejoin="round"/><path d="M494.5 228 V270" fill="none" stroke="#6a6760" stroke-width="4" stroke-opacity="1" stroke-linecap="butt" stroke-linejoin="round"/><path d="M493.5 229 V268 M496 229 V268" fill="none" stroke="#c4c0b4" stroke-width="0.9" stroke-opacity="1" stroke-linecap="butt" stroke-linejoin="round"/><path d="M149 259 L204 228 Q222 217.5 240 225 L290 250" fill="none" stroke="#e6e9e6" stroke-opacity="0.3" stroke-width="13.4" stroke-linecap="butt" stroke-linejoin="round"/><path d="M149 259 L204 228 Q222 217.5 240 225 L290 250" fill="none" stroke="#2a2722" stroke-width="12" stroke-linecap="butt" stroke-linejoin="round"/><path d="M149 259 L204 228 Q222 217.5 240 225 L290 250" fill="none" stroke="#676355" stroke-width="8.40" stroke-linecap="butt" stroke-linejoin="round" transform="translate(0 -1.20)"/><path d="M149 259 L204 228 Q222 217.5 240 225 L290 250" fill="none" stroke="#b0aa94" stroke-width="3.12" stroke-linecap="butt" stroke-linejoin="round" transform="translate(0 -2.64)" opacity="0.9"/><path d="M288 250 Q318 265 344 250 L360 241 L390 229" fill="none" stroke="#e6e9e6" stroke-opacity="0.3" stroke-width="16.4" stroke-linecap="butt" stroke-linejoin="round"/><path d="M288 250 Q318 265 344 250 L360 241 L390 229" fill="none" stroke="#2a2722" stroke-width="15" stroke-linecap="butt" stroke-linejoin="round"/><path d="M288 250 Q318 265 344 250 L360 241 L390 229" fill="none" stroke="#6d695c" stroke-width="10.50" stroke-linecap="butt" stroke-linejoin="round" transform="translate(0 -1.50)"/><path d="M288 250 Q318 265 344 250 L360 241 L390 229" fill="none" stroke="#b3ad98" stroke-width="3.90" stroke-linecap="butt" stroke-linejoin="round" transform="translate(0 -3.30)" opacity="0.9"/><path d="M246.8 238 L277.5 225.6 L290 232.8 L259.5 247.2z" fill="#a19c8f" opacity="0.9"/><path d="M246.8 222 L281 203" fill="none" stroke="#70451a" stroke-width="1.7" stroke-opacity="0.6" stroke-linecap="butt" stroke-linejoin="round"/><path d="M246.8 222 L281 203" fill="none" stroke="#b97f2e" stroke-width="1.2" stroke-opacity="1" stroke-linecap="butt" stroke-linejoin="round"/><path d="M246.8 230.0 L281 211.0" fill="none" stroke="#b97f2e" stroke-width="1.02" stroke-opacity="0.95" stroke-linecap="butt" stroke-linejoin="round"/><path d="M246.8 238 L281 219" fill="none" stroke="#70451a" stroke-width="1.08" stroke-opacity="0.9" stroke-linecap="butt" stroke-linejoin="round"/><path d="M246.8 222.0 v16" fill="none" stroke="#b97f2e" stroke-width="1.2" stroke-opacity="1" stroke-linecap="butt" stroke-linejoin="round"/><path d="M263.9 212.5 v16" fill="none" stroke="#b97f2e" stroke-width="1.2" stroke-opacity="1" stroke-linecap="butt" stroke-linejoin="round"/><path d="M281.0 203.0 v16" fill="none" stroke="#b97f2e" stroke-width="1.2" stroke-opacity="1" stroke-linecap="butt" stroke-linejoin="round"/><path d="M259.5 231 L292 210" fill="none" stroke="#70451a" stroke-width="1.7" stroke-opacity="0.6" stroke-linecap="butt" stroke-linejoin="round"/><path d="M259.5 231 L292 210" fill="none" stroke="#b97f2e" stroke-width="1.2" stroke-opacity="1" stroke-linecap="butt" stroke-linejoin="round"/><path d="M259.5 239.0 L292 218.0" fill="none" stroke="#b97f2e" stroke-width="1.02" stroke-opacity="0.95" stroke-linecap="butt" stroke-linejoin="round"/><path d="M259.5 247 L292 226" fill="none" stroke="#70451a" stroke-width="1.08" stroke-opacity="0.9" stroke-linecap="butt" stroke-linejoin="round"/><path d="M259.5 231.0 v16" fill="none" stroke="#b97f2e" stroke-width="1.2" stroke-opacity="1" stroke-linecap="butt" stroke-linejoin="round"/><path d="M275.8 220.5 v16" fill="none" stroke="#b97f2e" stroke-width="1.2" stroke-opacity="1" stroke-linecap="butt" stroke-linejoin="round"/><path d="M292.0 210.0 v16" fill="none" stroke="#b97f2e" stroke-width="1.2" stroke-opacity="1" stroke-linecap="butt" stroke-linejoin="round"/><path d="M246.8 222 L259.5 231 M281 203 L292 210" fill="none" stroke="#b97f2e" stroke-width="1.1" stroke-opacity="1" stroke-linecap="butt" stroke-linejoin="round"/><path d="M356 244 V280" fill="none" stroke="#2a2722" stroke-width="7.5" stroke-linecap="butt" stroke-linejoin="round"/><path d="M356 244 V280" fill="none" stroke="#514d43" stroke-width="5.25" stroke-linecap="butt" stroke-linejoin="round" transform="translate(0 -0.75)"/><path d="M356 244 V280" fill="none" stroke="#918b78" stroke-width="1.95" stroke-linecap="butt" stroke-linejoin="round" transform="translate(0 -1.65)" opacity="0.9"/><ellipse cx="359" cy="242" rx="7" ry="9.5" transform="rotate(-20 359 242)" fill="#76715f" stroke="#2c2823" stroke-width="1.5"/><ellipse cx="383" cy="231" rx="5.5" ry="9" transform="rotate(-20 383 231)" fill="#807a68" stroke="#2c2823" stroke-width="1.3"/><path d="M350 276 L362 276 L365 288 L352 289z" fill="#2b2823" opacity="1"/><path d="M362 282 L382 271 L470 311.5 L552 346" fill="none" stroke="#e4e8e5" stroke-width="5.6" stroke-opacity="0.3" stroke-linecap="butt" stroke-linejoin="round"/><path d="M362 282 L382 271 L470 311.5 L552 346" fill="none" stroke="#2b2823" stroke-width="3.6" stroke-opacity="1" stroke-linecap="butt" stroke-linejoin="round"/><path d="M362 281.3 L382 270.3 L470 310.8 L552 345.3" fill="none" stroke="#5f5a4e" stroke-width="1.1" stroke-opacity="1" stroke-linecap="butt" stroke-linejoin="round"/><path d="M550 346 Q556 353 563 350 L573 347" fill="none" stroke="#5a564c" stroke-width="4" stroke-opacity="1" stroke-linecap="butt" stroke-linejoin="round"/><path d="M388 243 L470 280 L522 303" fill="none" stroke="#2b2823" stroke-width="3.2" stroke-opacity="1" stroke-linecap="butt" stroke-linejoin="round"/><path d="M388 242.3 L470 279.3 L522 302.3" fill="none" stroke="#6b6658" stroke-width="0.9" stroke-opacity="1" stroke-linecap="butt" stroke-linejoin="round"/><path d="M395.7 243 V264" fill="none" stroke="#24221e" stroke-width="2.8" stroke-opacity="1" stroke-linecap="butt" stroke-linejoin="round"/><path d="M428.5 259 V281" fill="none" stroke="#24221e" stroke-width="2.4" stroke-opacity="1" stroke-linecap="butt" stroke-linejoin="round"/><path d="M437 261 V290" fill="none" stroke="#24221e" stroke-width="3.2" stroke-opacity="1" stroke-linecap="butt" stroke-linejoin="round"/><rect x="431" y="281" width="11" height="10" fill="#26231f"/><path d="M408 284 V292" fill="none" stroke="#24221e" stroke-width="1.6" stroke-opacity="1" stroke-linecap="butt" stroke-linejoin="round"/><path d="M494 311 L511 307 L523 315 L522 325 L505 328 L494 320z" fill="#26231f" opacity="1"/><path d="M520 330 L537 327 L545 335 L544 346 L528 348 L519 340z" fill="#34302a" opacity="1"/><path d="M491 346.5 L550.5 314" fill="none" stroke="#cbc8be" stroke-width="1.7" stroke-opacity="1" stroke-linecap="butt" stroke-linejoin="round"/><path d="M505 298 L505 325" fill="none" stroke="#24221e" stroke-width="1.5" stroke-opacity="1" stroke-linecap="butt" stroke-linejoin="round"/><ellipse cx="142" cy="266" rx="10" ry="11.5" transform="rotate(-15 142 266)" fill="#37332d" stroke="#5b564a" stroke-width="2.2"/><ellipse cx="141" cy="266" rx="5.8" ry="7.2" transform="rotate(-15 141 266)" fill="#85817a"/><ellipse cx="141" cy="266" rx="3.3" ry="4.3" fill="#2a2722"/><ellipse cx="164" cy="266.5" rx="5.8" ry="7.2" transform="rotate(-15 164 266.5)" fill="none" stroke="#47433a" stroke-width="2.4"/><ellipse cx="211.5" cy="239.5" rx="5.2" ry="6.2" transform="rotate(-15 211.5 239.5)" fill="none" stroke="#47433a" stroke-width="2.2"/><path d="M177.5 251 V280" fill="none" stroke="#36322b" stroke-width="8.5" stroke-opacity="1" stroke-linecap="butt" stroke-linejoin="round"/><path d="M175 252 V279" fill="none" stroke="#7a7568" stroke-width="2" stroke-opacity="1" stroke-linecap="butt" stroke-linejoin="round"/><path d="M165 281 L183 276 L191 282 L173 288z" fill="#38342c" opacity="1"/><path d="M246 261 L254 263 L253 270 L245 268z" fill="#3a362e" opacity="1"/><path d="M242 282 L246 278 L262 288 L259 292z" fill="#2b2823" opacity="1"/><path d="M266 292 L307 266 M268 298 L307 274" fill="none" stroke="#3a362d" stroke-width="1.8" stroke-opacity="1" stroke-linecap="butt" stroke-linejoin="round"/><path d="M317 279 V300" fill="none" stroke="#5a5448" stroke-width="1.3" stroke-opacity="0.8" stroke-linecap="butt" stroke-linejoin="round"/><path d="M368 312 L374 320 L376 328 M384 310 L378 318 M372 322 L380 324" fill="none" stroke="#4a4538" stroke-width="1.3" stroke-opacity="0.75" stroke-linecap="butt" stroke-linejoin="round"/><path d="M290 262 L317 276 M290 280 L316 268" fill="none" stroke="#4a4032" stroke-width="1.4" stroke-opacity="0.8" stroke-linecap="butt" stroke-linejoin="round"/><path d="M578 344 L618 333 L640 341 L642 364 L604 377 L575 364z" fill="url(#grt)" opacity="0.95"/><path d="M586 327 L606 322 L612 340 L600 352 L588 348z" fill="#c9ccc6" opacity="0.55"/><path d="M618 317 L652 306 L652 340 L624 343z" fill="url(#grt)" opacity="0.95"/><path d="M574 316 L598 312 L600 334 L582 338z" fill="#77736a" opacity="1"/><circle cx="586" cy="325" r="3" fill="#8f8b80"/><circle cx="593" cy="320" r="2.2" fill="#a9a598"/><path d="M569.8 304 L605.6 302" fill="none" stroke="#70451a" stroke-width="1.7" stroke-opacity="0.6" stroke-linecap="butt" stroke-linejoin="round"/><path d="M569.8 304 L605.6 302" fill="none" stroke="#b97f2e" stroke-width="1.2" stroke-opacity="1" stroke-linecap="butt" stroke-linejoin="round"/><path d="M569.8 311.0 L605.6 309.0" fill="none" stroke="#b97f2e" stroke-width="1.02" stroke-opacity="0.95" stroke-linecap="butt" stroke-linejoin="round"/><path d="M569.8 318 L605.6 316" fill="none" stroke="#70451a" stroke-width="1.08" stroke-opacity="0.9" stroke-linecap="butt" stroke-linejoin="round"/><path d="M569.8 304.0 v14" fill="none" stroke="#b97f2e" stroke-width="1.2" stroke-opacity="1" stroke-linecap="butt" stroke-linejoin="round"/><path d="M587.7 303.0 v14" fill="none" stroke="#b97f2e" stroke-width="1.2" stroke-opacity="1" stroke-linecap="butt" stroke-linejoin="round"/><path d="M605.6 302.0 v14" fill="none" stroke="#b97f2e" stroke-width="1.2" stroke-opacity="1" stroke-linecap="butt" stroke-linejoin="round"/><path d="M605.6 302 L645.7 297.7" fill="none" stroke="#b97f2e" stroke-width="1" stroke-opacity="1" stroke-linecap="butt" stroke-linejoin="round"/><path d="M608 318 L645.7 301" fill="none" stroke="#70451a" stroke-width="1.7" stroke-opacity="0.6" stroke-linecap="butt" stroke-linejoin="round"/><path d="M608 318 L645.7 301" fill="none" stroke="#b97f2e" stroke-width="1.2" stroke-opacity="1" stroke-linecap="butt" stroke-linejoin="round"/><path d="M608 325.0 L645.7 308.0" fill="none" stroke="#b97f2e" stroke-width="1.02" stroke-opacity="0.95" stroke-linecap="butt" stroke-linejoin="round"/><path d="M608 332 L645.7 315" fill="none" stroke="#70451a" stroke-width="1.08" stroke-opacity="0.9" stroke-linecap="butt" stroke-linejoin="round"/><path d="M608.0 318.0 v14" fill="none" stroke="#b97f2e" stroke-width="1.2" stroke-opacity="1" stroke-linecap="butt" stroke-linejoin="round"/><path d="M626.9 309.5 v14" fill="none" stroke="#b97f2e" stroke-width="1.2" stroke-opacity="1" stroke-linecap="butt" stroke-linejoin="round"/><path d="M645.7 301.0 v14" fill="none" stroke="#b97f2e" stroke-width="1.2" stroke-opacity="1" stroke-linecap="butt" stroke-linejoin="round"/><path d="M605.6 302 V331" fill="none" stroke="#b97f2e" stroke-width="1.1" stroke-opacity="1" stroke-linecap="butt" stroke-linejoin="round"/><path d="M565.5 344 L603.5 357" fill="none" stroke="#70451a" stroke-width="1.7" stroke-opacity="0.6" stroke-linecap="butt" stroke-linejoin="round"/><path d="M565.5 344 L603.5 357" fill="none" stroke="#b97f2e" stroke-width="1.2" stroke-opacity="1" stroke-linecap="butt" stroke-linejoin="round"/><path d="M565.5 355.5 L603.5 368.5" fill="none" stroke="#b97f2e" stroke-width="1.02" stroke-opacity="0.95" stroke-linecap="butt" stroke-linejoin="round"/><path d="M565.5 367 L603.5 380" fill="none" stroke="#70451a" stroke-width="1.08" stroke-opacity="0.9" stroke-linecap="butt" stroke-linejoin="round"/><path d="M565.5 344.0 v23" fill="none" stroke="#b97f2e" stroke-width="1.2" stroke-opacity="1" stroke-linecap="butt" stroke-linejoin="round"/><path d="M584.5 350.5 v23" fill="none" stroke="#b97f2e" stroke-width="1.2" stroke-opacity="1" stroke-linecap="butt" stroke-linejoin="round"/><path d="M603.5 357.0 v23" fill="none" stroke="#b97f2e" stroke-width="1.2" stroke-opacity="1" stroke-linecap="butt" stroke-linejoin="round"/><path d="M603.5 357 L655 340" fill="none" stroke="#70451a" stroke-width="1.7" stroke-opacity="0.6" stroke-linecap="butt" stroke-linejoin="round"/><path d="M603.5 357 L655 340" fill="none" stroke="#b97f2e" stroke-width="1.2" stroke-opacity="1" stroke-linecap="butt" stroke-linejoin="round"/><path d="M603.5 367.0 L655 350.0" fill="none" stroke="#b97f2e" stroke-width="1.02" stroke-opacity="0.95" stroke-linecap="butt" stroke-linejoin="round"/><path d="M603.5 377 L655 360" fill="none" stroke="#70451a" stroke-width="1.08" stroke-opacity="0.9" stroke-linecap="butt" stroke-linejoin="round"/><path d="M603.5 357.0 v20" fill="none" stroke="#b97f2e" stroke-width="1.2" stroke-opacity="1" stroke-linecap="butt" stroke-linejoin="round"/><path d="M629.2 348.5 v20" fill="none" stroke="#b97f2e" stroke-width="1.2" stroke-opacity="1" stroke-linecap="butt" stroke-linejoin="round"/><path d="M655.0 340.0 v20" fill="none" stroke="#b97f2e" stroke-width="1.2" stroke-opacity="1" stroke-linecap="butt" stroke-linejoin="round"/><path d="M565.5 367.5 L603.5 381.5 L655 359" fill="none" stroke="#70451a" stroke-width="1.9" stroke-opacity="1" stroke-linecap="butt" stroke-linejoin="round"/><path d="M604 294 L612 300" fill="none" stroke="#333" stroke-width="1.1" stroke-opacity="1" stroke-linecap="butt" stroke-linejoin="round"/></g></g></svg>
<svg style="left:0;top:0" width="664" height="200"><g fill="#a9bdb0" opacity="0.45"><circle cx="615.3" cy="135" r="6.3"/><circle cx="630.8" cy="135" r="6.3"/><circle cx="615.3" cy="153" r="6.3"/><circle cx="630.8" cy="153" r="6.3"/><circle cx="623" cy="131.5" r="6.3"/><circle cx="623" cy="157" r="6.3"/></g><ellipse cx="623.1" cy="144.3" rx="17" ry="8.6" fill="#5a76ae"/><ellipse cx="623.1" cy="143.3" rx="10.6" ry="12.3" fill="#93a6cb" opacity="0.8"/><path d="M613.1 139.3 L633.1 149.3 M633.1 139.3 L613.1 149.3 M623.1 132.3 V155.3" stroke="#7a88a8" stroke-width="0.4"/><ellipse cx="623.1" cy="144.60000000000002" rx="21.3" ry="11.2" fill="none" stroke="#935c2c" stroke-width="1.1"/><circle cx="601.9" cy="144.9" r="2.1" fill="#cdeefa" stroke="#9cc8dc" stroke-width="0.4"/><circle cx="644.4" cy="144.1" r="2.1" fill="#cdeefa" stroke="#9cc8dc" stroke-width="0.4"/><circle cx="623.5" cy="155.6" r="2.1" fill="#cdeefa" stroke="#9cc8dc" stroke-width="0.4"/><g opacity="1"><circle cx="622.9" cy="126.6" r="3.4" fill="#f6f5f2" stroke="#7a5a3c" stroke-width="0.8"/><text x="622.9" y="128.15" font-size="4.4" font-weight="bold" text-anchor="middle" fill="#1a1a1a" font-family="Liberation Sans">U</text></g><g opacity="0.55"><circle cx="607.6" cy="137.1" r="3.4" fill="#f6f5f2" stroke="#7a5a3c" stroke-width="0.8"/><text x="607.6" y="138.65" font-size="4.4" font-weight="bold" text-anchor="middle" fill="#1a1a1a" font-family="Liberation Sans">N</text></g><g opacity="0.55"><circle cx="637.5" cy="136.4" r="3.4" fill="#f6f5f2" stroke="#7a5a3c" stroke-width="0.8"/><text x="637.5" y="137.95000000000002" font-size="4.4" font-weight="bold" text-anchor="middle" fill="#1a1a1a" font-family="Liberation Sans">E</text></g><g opacity="1"><circle cx="608.6" cy="152.3" r="3.4" fill="#f6f5f2" stroke="#7a5a3c" stroke-width="0.8"/><text x="608.6" y="153.85000000000002" font-size="4.4" font-weight="bold" text-anchor="middle" fill="#1a1a1a" font-family="Liberation Sans">W</text></g><g opacity="1"><circle cx="638.5" cy="151.8" r="3.4" fill="#f6f5f2" stroke="#7a5a3c" stroke-width="0.8"/><text x="638.5" y="153.35000000000002" font-size="4.4" font-weight="bold" text-anchor="middle" fill="#1a1a1a" font-family="Liberation Sans">S</text></g><g opacity="1"><circle cx="622.9" cy="162.4" r="3.4" fill="#f6f5f2" stroke="#7a5a3c" stroke-width="0.8"/><text x="622.9" y="163.95000000000002" font-size="4.4" font-weight="bold" text-anchor="middle" fill="#1a1a1a" font-family="Liberation Sans">D</text></g><circle cx="600.6" cy="174.4" r="2.9" fill="#f7f7f7" stroke="#c8c8c8" stroke-width="0.4"/><path d="M598.8000000000001 174.4 h3.6 M600.6 172.6 v3.6" stroke="#222" stroke-width="0.75"/><circle cx="609.3" cy="174.4" r="2.9" fill="#f7f7f7" stroke="#c8c8c8" stroke-width="0.4"/><path d="M607.5 174.4 h3.6 M609.3 172.6 v3.6" stroke="#222" stroke-width="0.75"/><circle cx="623.1" cy="174.4" r="1.9" fill="#5568b0"/><circle cx="637" cy="174.4" r="2.9" fill="#1f3f70" stroke="#8aa0b8" stroke-width="0.4"/><path d="M635.6 172.6 q-1 2.2 0.6 3.8 q1.6 0.8 2.8 -0.4" fill="none" stroke="#9fd0f5" stroke-width="0.7"/><circle cx="644.9" cy="174.4" r="2.7" fill="#8fa8c0" opacity="0.8"/><path d="M643.4 175.4 h3 v-1.3 l-1.5 -1.3 -1.5 1.3z" fill="#dbe8f2"/></svg>
<div class="a" style="left:653.5px;top:120px;width:10.5px;height:289px;background:#f5f5f6;"></div>
<div class="a" style="left:653.3px;top:120px;width:0.6px;height:289px;background:#e2e2e2;"></div>
<div class="a" style="left:654px;top:121px;width:9.5px;height:37px;background:#dde3ef;"></div>
<div class="a" style="left:654px;top:158.5px;width:9.5px;height:37px;background:#dde3ef;"></div>
<div class="a" style="left:654px;top:196.5px;width:9.5px;height:58px;background:#dde3ef;"></div>
<svg style="left:0;top:0" width="664" height="420"><text transform="translate(657 130) rotate(90)" font-size="5.2" fill="#333" stroke="#333" stroke-width="0.05" font-family="Liberation Sans" textLength="20" lengthAdjust="spacingAndGlyphs">Properties</text><text transform="translate(657 169) rotate(90)" font-size="5.2" fill="#333" stroke="#333" stroke-width="0.05" font-family="Liberation Sans" textLength="20" lengthAdjust="spacingAndGlyphs">Attributes</text><text transform="translate(657 209) rotate(90)" font-size="5.2" fill="#333" stroke="#333" stroke-width="0.05" font-family="Liberation Sans" textLength="36" lengthAdjust="spacingAndGlyphs">Command Window</text><path d="M657.5 153.5 l2.2 2.2 M659.7 153.5 l-2.2 2.2 M657.5 191.8 l2.2 2.2 M659.7 191.8 l-2.2 2.2 M657.5 249 l2.2 2.2 M659.7 249 l-2.2 2.2" stroke="#111" stroke-width="0.7"/><rect x="655.5" y="122.3" width="6" height="5" rx="0.8" fill="#5a7fb8"/><path d="M655.5 124 h6 M655.5 125.7 h6 M657.5 122.3 v5 M659.5 122.3 v5" stroke="#fff" stroke-width="0.4"/><rect x="655.5" y="160" width="6" height="6" rx="1" fill="#e8eef6" stroke="#555" stroke-width="0.5"/><path d="M656.5 205 l2 -4.5 2 4.5 M657.3 203.3 h2.4" fill="none" stroke="#3a7ac0" stroke-width="0.7"/></svg>
<div class="a" style="left:0px;top:406.5px;width:117px;height:2.5px;background:#e9e9e9;"></div>
<div class="a" style="left:0px;top:409px;width:664px;height:8px;background:#e2e2e2;"></div>
<div class="a" style="left:0px;top:417px;width:664px;height:9.5px;background:#f0f0f0;"></div>
<div class="a" style="left:0px;top:408.6px;width:664px;height:0.7px;background:#b8b8b8;"></div>
<div class="a" style="left:16px;top:408.6px;width:52px;height:8.2px;background:#dcdff3;"></div>
<div class="t" style="left:17.5px;top:410.92px;font-size:5.07px;color:#333;transform:scaleX(0.769);transform-origin:0 50%;">3D View(1) - Drawlist(1)</div>
<svg style="left:0;top:0" width="664" height="430"><path d="M1.5 412.3 l1 1.2 1 -1.2z" fill="#222"/><path d="M62.5 411.5 l2.3 2.3 M64.8 411.5 l-2.3 2.3" stroke="#333" stroke-width="0.6"/><path d="M1.6 420 v5 M1.6 420 h3 l-0.6 1.2 0.6 1.2 h-3" fill="none" stroke="#888" stroke-width="0.5"/></svg>
<div class="t" style="left:8px;top:419.27px;font-size:5.98px;color:#8a8a8a;transform:scaleX(0.769);transform-origin:0 50%;letter-spacing:0.6px">-,-,-</div>
<svg style="left:0;top:0" width="664" height="430"><rect x="539.5" y="419" width="5" height="4.5" fill="#d8dde3"/><rect x="550" y="419" width="4.5" height="4.5" fill="#e8e8e8" stroke="#bbb" stroke-width="0.3"/><circle cx="552.5" cy="419.3" r="1" fill="#d9303c"/><rect x="559.5" y="420.5" width="3" height="3" fill="#e0e0e0"/><circle cx="561.5" cy="423" r="0.6" fill="#2b5da0"/><path d="M565.8 419.5 l3 3 M568.8 419.5 l-3 3" stroke="#555" stroke-width="0.6"/><circle cx="566.0999999999999" cy="419.4" r="0.8" fill="#d9303c"/><rect x="575.3" y="419.5" width="3.6" height="3.4" fill="none" stroke="#555" stroke-width="0.5"/><circle cx="576.8" cy="419.4" r="0.8" fill="#d9303c"/><path d="M584.3 419.5 v4 M584.3 421.5 h3.4 M587.6999999999999 419.5 v4" stroke="#3b4f70" stroke-width="0.6"/><circle cx="586.0999999999999" cy="421.5" r="0.6" fill="#4f8fd8"/><path d="M593 419.5 v4 M593 421.5 h3.4 M596.4 419.5 v4" stroke="#3b4f70" stroke-width="0.6"/><circle cx="594.8" cy="421.5" r="0.6" fill="#4f8fd8"/><path d="M601.8 419.5 v4 M601.8 421.5 h3.4 M605.1999999999999 419.5 v4" stroke="#3b4f70" stroke-width="0.6"/><circle cx="603.5999999999999" cy="421.5" r="0.6" fill="#4f8fd8"/><path d="M610.7 419.5 v4 M610.7 421.5 h3.4 M614.1 419.5 v4" stroke="#3b4f70" stroke-width="0.6"/><circle cx="612.5" cy="421.5" r="0.6" fill="#4f8fd8"/><path d="M619.5 419.5 v4 M619.5 421.5 h3.4 M622.9 419.5 v4" stroke="#3b4f70" stroke-width="0.6"/><circle cx="621.3" cy="421.5" r="0.6" fill="#4f8fd8"/><path d="M629.3 419.5 v4 M629.3 421.5 h3.4 M632.6999999999999 419.5 v4" stroke="#3b4f70" stroke-width="0.6"/><circle cx="631.0999999999999" cy="421.5" r="0.6" fill="#4f8fd8"/><circle cx="639.8" cy="421.5" r="1.5" fill="#2b4f8e"/><rect x="647" y="419.3" width="2.6" height="2.6" fill="#2b4f8e"/><rect x="648.5" y="421" width="2.6" height="2.6" fill="#8fb0d8"/><rect x="656.6" y="419.5" width="4" height="4" fill="#7f8ea5"/></svg>
</body></html>
